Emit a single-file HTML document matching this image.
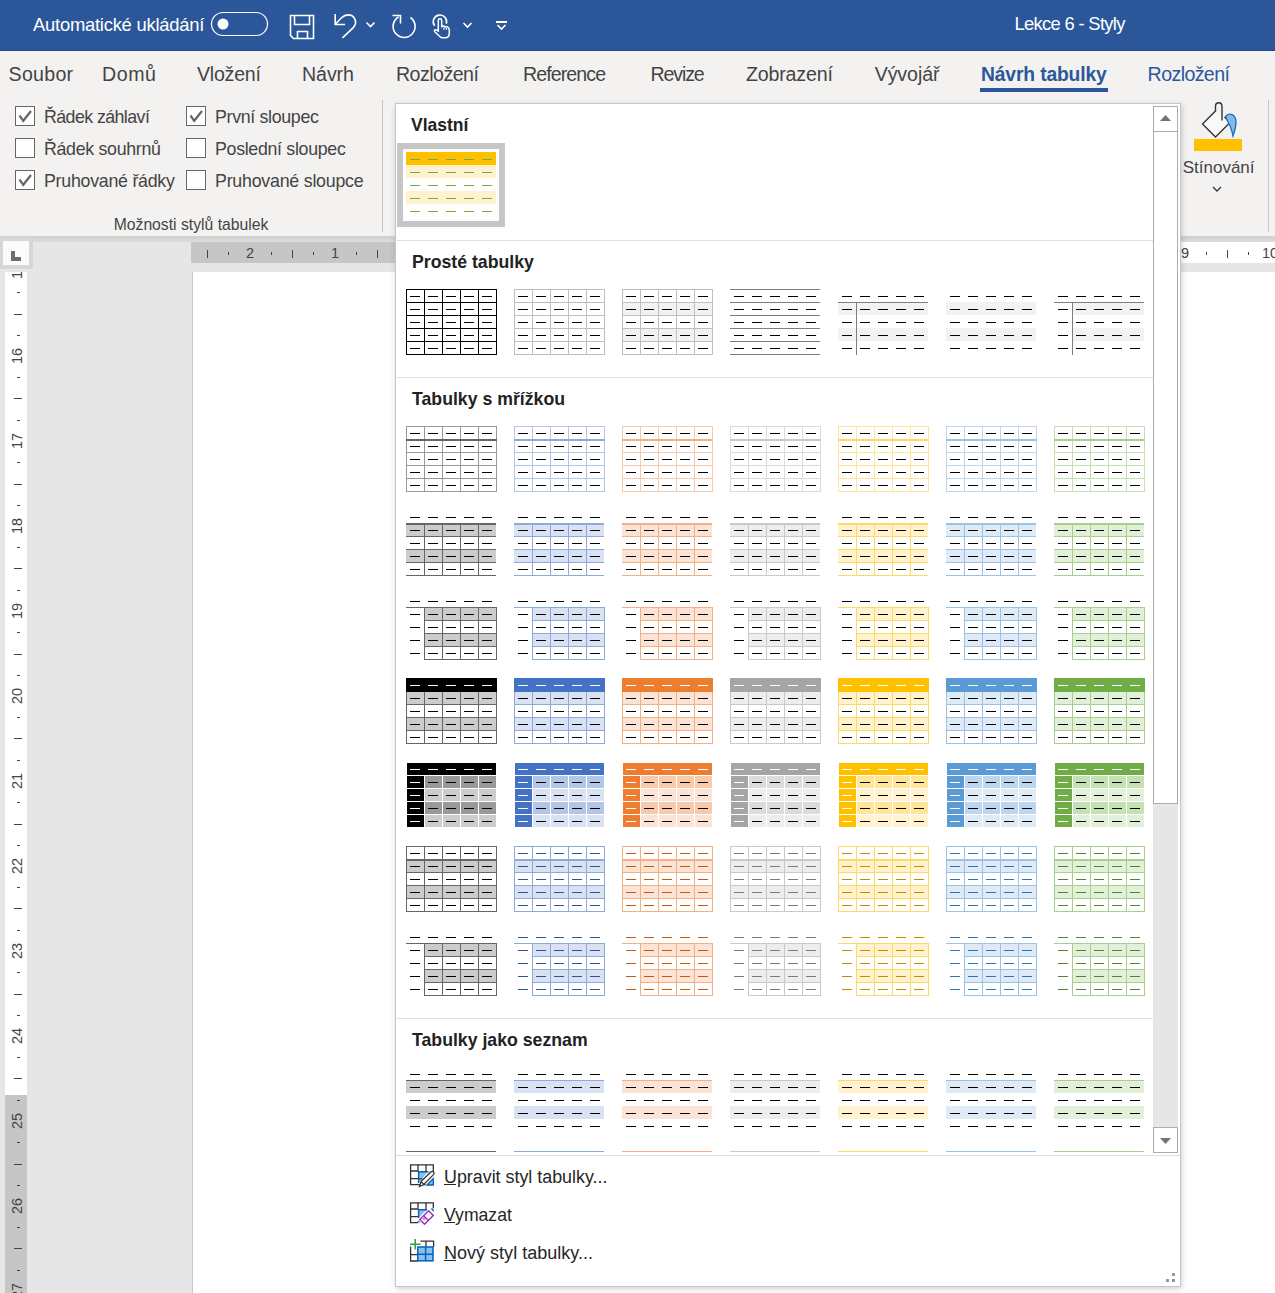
<!DOCTYPE html><html><head><meta charset="utf-8"><style>
*{box-sizing:border-box}
html,body{margin:0;padding:0}
body{width:1275px;height:1293px;overflow:hidden;position:relative;background:#e6e6e6;font-family:"Liberation Sans",sans-serif}
.t{position:absolute;white-space:nowrap;line-height:1;font-family:"Liberation Sans",sans-serif}
.a{position:absolute}
svg{position:absolute;left:0;top:0;overflow:visible}
</style></head><body>

<div class="a" style="left:0;top:0;width:1275px;height:51px;background:#2b579a"></div>
<div class="a" style="left:0;top:50px;width:1275px;height:1px;background:#1e4a8a"></div>
<div class="t" style="left:33.00px;top:16.00px;font-size:18.40px;color:#fff;letter-spacing:-0.237px;">Automatické ukládání</div>
<div class="t" style="left:1014.50px;top:15.00px;font-size:18.40px;color:#fff;letter-spacing:-0.693px;">Lekce 6 - Styly</div>
<svg width="1275" height="51" style="left:0;top:0">
<g fill="none" stroke="#fff" stroke-width="1.2">
<rect x="211.5" y="12.5" width="56" height="23" rx="11.5"/>
</g>
<circle cx="223" cy="24" r="5.5" fill="#fff"/>
<g fill="none" stroke="#fff" stroke-width="1.6" stroke-linejoin="miter">
<path d="M290.5 15.5 H313.5 V38.5 H293.5 L290.5 35.5 Z"/>
<path d="M294.5 15.5 V24.5 H309.5 V15.5"/>
<path d="M297.5 38.5 V31.5 H307.5 V38.5"/>
<path d="M335.2 14 V24.5 H345" />
<path d="M335.5 24 L341.5 17.8 C345.5 13.8 351.5 14 354 17.5 C356.5 21 355.8 25 352.8 28.2 L342.5 37.8"/>
<path d="M366.5 22.5 L370.5 26.5 L374.5 22.5"/>
<path d="M401 40 " />
<path d="M410.5 17.5 A11 11 0 1 1 398.5 17" />
<path d="M392.5 15.5 H400.5 V23.5" />
<path d="M463.5 23 L467.5 27 L471.5 23"/>
<path d="M496 22 H507" stroke-width="2"/>
<path d="M497.5 25 L501.5 29 L505.5 25"/>
<path d="M434.6 25.8 A6.7 6.7 0 1 1 446.3 23.8"/>
<path d="M438.3 31 V20.5 C438.3 18.2 441.7 18.2 441.7 20.5 V26.5 C443 25.8 444.5 26 445 27 C446.2 26.3 447.8 26.6 448.4 27.8 C449 28.2 449.3 29 449.3 30 V33.5 C449.3 36 447.5 37.8 445 37.8 H442.5 C441.2 37.8 440.5 37.2 439.8 36.4 L434.8 31.8 C434 31 434.5 29.5 435.8 29.8 C436.8 30 437.5 30.5 438.3 31 Z" stroke-width="1.5"/>
<path d="M443.9 27.5 V29.8 M446.4 28 V29.8" stroke-width="1.2"/>
</g>
</svg>
<div class="a" style="left:0;top:51px;width:1275px;height:185px;background:#f3f2f1"></div>
<div class="t" style="left:8.60px;top:65.00px;font-size:19.60px;color:#444;letter-spacing:0.258px;">Soubor</div>
<div class="t" style="left:102.00px;top:65.00px;font-size:19.60px;color:#444;letter-spacing:0.556px;">Domů</div>
<div class="t" style="left:197.00px;top:65.00px;font-size:19.60px;color:#444;letter-spacing:-0.244px;">Vložení</div>
<div class="t" style="left:302.00px;top:65.00px;font-size:19.60px;color:#444;letter-spacing:-0.083px;">Návrh</div>
<div class="t" style="left:396.00px;top:65.00px;font-size:19.60px;color:#444;letter-spacing:-0.527px;">Rozložení</div>
<div class="t" style="left:523.00px;top:65.00px;font-size:19.60px;color:#444;letter-spacing:-0.920px;">Reference</div>
<div class="t" style="left:650.50px;top:65.00px;font-size:19.60px;color:#444;letter-spacing:-1.135px;">Revize</div>
<div class="t" style="left:746.00px;top:65.00px;font-size:19.60px;color:#444;letter-spacing:-0.175px;">Zobrazení</div>
<div class="t" style="left:874.70px;top:65.00px;font-size:19.60px;color:#444;letter-spacing:-0.093px;">Vývojář</div>
<div class="t" style="left:981.00px;top:65.00px;font-size:19.30px;color:#2b579a;font-weight:700;letter-spacing:-0.147px;">Návrh tabulky</div>
<div class="t" style="left:1147.60px;top:65.00px;font-size:19.60px;color:#2b579a;letter-spacing:-0.602px;">Rozložení</div>
<div class="a" style="left:980px;top:88px;width:128px;height:4px;background:#2b579a"></div>
<div class="a" style="left:15px;top:106px;width:20px;height:20px;border:1px solid #666;background:#fff"></div><svg width="20" height="20" style="left:15px;top:106px"><path d="M4.5 9.5 L8.2 14.8 L16 5" fill="none" stroke="#666" stroke-width="2.2"/></svg>
<div class="t" style="left:44.00px;top:109.00px;font-size:17.80px;color:#444;letter-spacing:-0.571px;">Řádek záhlaví</div>
<div class="a" style="left:15px;top:138px;width:20px;height:20px;border:1px solid #666;background:#fff"></div>
<div class="t" style="left:44.00px;top:141.00px;font-size:17.80px;color:#444;letter-spacing:-0.307px;">Řádek souhrnů</div>
<div class="a" style="left:15px;top:170px;width:20px;height:20px;border:1px solid #666;background:#fff"></div><svg width="20" height="20" style="left:15px;top:170px"><path d="M4.5 9.5 L8.2 14.8 L16 5" fill="none" stroke="#666" stroke-width="2.2"/></svg>
<div class="t" style="left:44.00px;top:173.00px;font-size:17.80px;color:#444;letter-spacing:-0.255px;">Pruhované řádky</div>
<div class="a" style="left:186px;top:106px;width:20px;height:20px;border:1px solid #666;background:#fff"></div><svg width="20" height="20" style="left:186px;top:106px"><path d="M4.5 9.5 L8.2 14.8 L16 5" fill="none" stroke="#666" stroke-width="2.2"/></svg>
<div class="t" style="left:215.00px;top:109.00px;font-size:17.80px;color:#444;letter-spacing:-0.322px;">První sloupec</div>
<div class="a" style="left:186px;top:138px;width:20px;height:20px;border:1px solid #666;background:#fff"></div>
<div class="t" style="left:215.00px;top:141.00px;font-size:17.80px;color:#444;letter-spacing:-0.309px;">Poslední sloupec</div>
<div class="a" style="left:186px;top:170px;width:20px;height:20px;border:1px solid #666;background:#fff"></div>
<div class="t" style="left:215.00px;top:173.00px;font-size:17.80px;color:#444;letter-spacing:-0.223px;">Pruhované sloupce</div>
<div class="t" style="left:113.70px;top:217.00px;font-size:15.72px;color:#444;">Možnosti stylů tabulek</div>
<div class="a" style="left:382px;top:100px;width:1px;height:132px;background:#c8c6c4"></div>
<div class="a" style="left:1268px;top:100px;width:1px;height:132px;background:#c8c6c4"></div>
<div class="a" style="left:1194px;top:139px;width:48px;height:12px;background:#ffc000"></div>
<svg width="1275" height="236" style="left:0;top:0">
<path d="M1215.5 111 L1202.5 124 L1215.5 137 L1230 122.5 L1224 116.5 L1222 114.5 Z" fill="#f9f9f9" stroke="none"/>
<path d="M1215.5 111 L1202.5 124 L1215.5 137 L1230 122.5 L1224.5 117" fill="none" stroke="#333" stroke-width="1.4" stroke-linejoin="miter"/>
<path d="M1215.5 111.5 V106.5 C1215.5 101.5 1222 101.5 1222 106.5 V120.5" fill="none" stroke="#333" stroke-width="1.4"/>
<path d="M1225.5 116.5 C1229 112 1236 114 1236 122 C1236 128 1234 133 1233 136 C1232 131 1231 127 1228 122 Z" fill="#83b9e8" stroke="#1e6cc0" stroke-width="1.3"/>
<path d="M1213 187 L1217 191 L1221 187" fill="none" stroke="#333" stroke-width="1.3"/>
</svg>
<div class="t" style="left:1182.70px;top:159.00px;font-size:17.00px;color:#444;">Stínování</div>
<div class="a" style="left:0;top:236px;width:1275px;height:6px;background:linear-gradient(#cfcfcf,#dcdcdc)"></div>
<div class="a" style="left:191px;top:242px;width:1084px;height:21px;background:#fff"></div>
<div class="a" style="left:191px;top:242px;width:229px;height:21px;background:#c6c6c6"></div>
<div class="a" style="left:192px;top:272px;width:1083px;height:1021px;background:#fff;border-left:1px solid #c6c6c6"></div>
<div class="a" style="left:5px;top:272px;width:22px;height:823px;background:#fff"></div>
<div class="a" style="left:5px;top:1095px;width:22px;height:198px;background:#c6c6c6"></div>
<svg width="1275" height="1293" style="left:0;top:0"><defs><clipPath id="hrc"><rect x="191" y="242" width="1084" height="21"/></clipPath></defs><g clip-path="url(#hrc)"><rect x="186" y="252" width="1" height="3" fill="#444"/><rect x="207" y="250" width="1" height="8" fill="#444"/><rect x="228" y="252" width="1" height="3" fill="#444"/><rect x="271" y="252" width="1" height="3" fill="#444"/><rect x="292" y="250" width="1" height="8" fill="#444"/><rect x="313" y="252" width="1" height="3" fill="#444"/><rect x="356" y="252" width="1" height="3" fill="#444"/><rect x="377" y="250" width="1" height="8" fill="#444"/><rect x="398" y="252" width="1" height="3" fill="#444"/><rect x="441" y="252" width="1" height="3" fill="#444"/><rect x="462" y="250" width="1" height="8" fill="#444"/><rect x="483" y="252" width="1" height="3" fill="#444"/><rect x="526" y="252" width="1" height="3" fill="#444"/><rect x="547" y="250" width="1" height="8" fill="#444"/><rect x="568" y="252" width="1" height="3" fill="#444"/><rect x="611" y="252" width="1" height="3" fill="#444"/><rect x="632" y="250" width="1" height="8" fill="#444"/><rect x="653" y="252" width="1" height="3" fill="#444"/><rect x="696" y="252" width="1" height="3" fill="#444"/><rect x="717" y="250" width="1" height="8" fill="#444"/><rect x="738" y="252" width="1" height="3" fill="#444"/><rect x="781" y="252" width="1" height="3" fill="#444"/><rect x="802" y="250" width="1" height="8" fill="#444"/><rect x="823" y="252" width="1" height="3" fill="#444"/><rect x="866" y="252" width="1" height="3" fill="#444"/><rect x="887" y="250" width="1" height="8" fill="#444"/><rect x="908" y="252" width="1" height="3" fill="#444"/><rect x="951" y="252" width="1" height="3" fill="#444"/><rect x="972" y="250" width="1" height="8" fill="#444"/><rect x="993" y="252" width="1" height="3" fill="#444"/><rect x="1036" y="252" width="1" height="3" fill="#444"/><rect x="1057" y="250" width="1" height="8" fill="#444"/><rect x="1078" y="252" width="1" height="3" fill="#444"/><rect x="1121" y="252" width="1" height="3" fill="#444"/><rect x="1142" y="250" width="1" height="8" fill="#444"/><rect x="1163" y="252" width="1" height="3" fill="#444"/><rect x="1206" y="252" width="1" height="3" fill="#444"/><rect x="1227" y="250" width="1" height="8" fill="#444"/><rect x="1248" y="252" width="1" height="3" fill="#444"/><rect x="1291" y="252" width="1" height="3" fill="#444"/><rect x="1312" y="250" width="1" height="8" fill="#444"/><rect x="1333" y="252" width="1" height="3" fill="#444"/><rect x="1376" y="252" width="1" height="3" fill="#444"/><rect x="1397" y="250" width="1" height="8" fill="#444"/><rect x="1418" y="252" width="1" height="3" fill="#444"/></g></svg>
<div class="t" style="left:245.94px;top:246.00px;font-size:14.50px;color:#444;">2</div>
<div class="t" style="left:330.94px;top:246.00px;font-size:14.50px;color:#444;">1</div>
<div class="t" style="left:1180.94px;top:246.00px;font-size:14.50px;color:#444;">9</div>
<div class="t" style="left:1261.95px;top:246.00px;font-size:14.50px;color:#444;">10</div>
<div class="a" style="left:0;top:272px;width:40px;height:1021px;overflow:hidden">
<svg width="40" height="1100" style="left:0;top:0"><rect x="17" y="-65" width="3" height="1" fill="#444"/><rect x="14" y="-44" width="8" height="1" fill="#444"/><rect x="17" y="-22" width="3" height="1" fill="#444"/><rect x="17" y="20" width="3" height="1" fill="#444"/><rect x="14" y="42" width="8" height="1" fill="#444"/><rect x="17" y="63" width="3" height="1" fill="#444"/><rect x="17" y="105" width="3" height="1" fill="#444"/><rect x="14" y="126" width="8" height="1" fill="#444"/><rect x="17" y="148" width="3" height="1" fill="#444"/><rect x="17" y="190" width="3" height="1" fill="#444"/><rect x="14" y="212" width="8" height="1" fill="#444"/><rect x="17" y="233" width="3" height="1" fill="#444"/><rect x="17" y="275" width="3" height="1" fill="#444"/><rect x="14" y="296" width="8" height="1" fill="#444"/><rect x="17" y="318" width="3" height="1" fill="#444"/><rect x="17" y="360" width="3" height="1" fill="#444"/><rect x="14" y="382" width="8" height="1" fill="#444"/><rect x="17" y="403" width="3" height="1" fill="#444"/><rect x="17" y="445" width="3" height="1" fill="#444"/><rect x="14" y="466" width="8" height="1" fill="#444"/><rect x="17" y="488" width="3" height="1" fill="#444"/><rect x="17" y="530" width="3" height="1" fill="#444"/><rect x="14" y="552" width="8" height="1" fill="#444"/><rect x="17" y="573" width="3" height="1" fill="#444"/><rect x="17" y="615" width="3" height="1" fill="#444"/><rect x="14" y="636" width="8" height="1" fill="#444"/><rect x="17" y="658" width="3" height="1" fill="#444"/><rect x="17" y="700" width="3" height="1" fill="#444"/><rect x="14" y="722" width="8" height="1" fill="#444"/><rect x="17" y="743" width="3" height="1" fill="#444"/><rect x="17" y="785" width="3" height="1" fill="#444"/><rect x="14" y="806" width="8" height="1" fill="#444"/><rect x="17" y="828" width="3" height="1" fill="#444"/><rect x="17" y="870" width="3" height="1" fill="#444"/><rect x="14" y="892" width="8" height="1" fill="#444"/><rect x="17" y="913" width="3" height="1" fill="#444"/><rect x="17" y="955" width="3" height="1" fill="#444"/><rect x="14" y="976" width="8" height="1" fill="#444"/><rect x="17" y="998" width="3" height="1" fill="#444"/><rect x="17" y="1040" width="3" height="1" fill="#444"/><rect x="14" y="1062" width="8" height="1" fill="#444"/><rect x="17" y="1083" width="3" height="1" fill="#444"/></svg>
<div class="t" style="left:-23px;top:-9.0px;width:80px;height:16px;text-align:center;font-size:14.5px;line-height:16px;color:#444;transform:rotate(-90deg);transform-origin:40px 8px">15</div>
<div class="t" style="left:-23px;top:76.0px;width:80px;height:16px;text-align:center;font-size:14.5px;line-height:16px;color:#444;transform:rotate(-90deg);transform-origin:40px 8px">16</div>
<div class="t" style="left:-23px;top:161.0px;width:80px;height:16px;text-align:center;font-size:14.5px;line-height:16px;color:#444;transform:rotate(-90deg);transform-origin:40px 8px">17</div>
<div class="t" style="left:-23px;top:246.0px;width:80px;height:16px;text-align:center;font-size:14.5px;line-height:16px;color:#444;transform:rotate(-90deg);transform-origin:40px 8px">18</div>
<div class="t" style="left:-23px;top:331.0px;width:80px;height:16px;text-align:center;font-size:14.5px;line-height:16px;color:#444;transform:rotate(-90deg);transform-origin:40px 8px">19</div>
<div class="t" style="left:-23px;top:416.0px;width:80px;height:16px;text-align:center;font-size:14.5px;line-height:16px;color:#444;transform:rotate(-90deg);transform-origin:40px 8px">20</div>
<div class="t" style="left:-23px;top:501.0px;width:80px;height:16px;text-align:center;font-size:14.5px;line-height:16px;color:#444;transform:rotate(-90deg);transform-origin:40px 8px">21</div>
<div class="t" style="left:-23px;top:586.0px;width:80px;height:16px;text-align:center;font-size:14.5px;line-height:16px;color:#444;transform:rotate(-90deg);transform-origin:40px 8px">22</div>
<div class="t" style="left:-23px;top:671.0px;width:80px;height:16px;text-align:center;font-size:14.5px;line-height:16px;color:#444;transform:rotate(-90deg);transform-origin:40px 8px">23</div>
<div class="t" style="left:-23px;top:756.0px;width:80px;height:16px;text-align:center;font-size:14.5px;line-height:16px;color:#444;transform:rotate(-90deg);transform-origin:40px 8px">24</div>
<div class="t" style="left:-23px;top:841.0px;width:80px;height:16px;text-align:center;font-size:14.5px;line-height:16px;color:#444;transform:rotate(-90deg);transform-origin:40px 8px">25</div>
<div class="t" style="left:-23px;top:926.0px;width:80px;height:16px;text-align:center;font-size:14.5px;line-height:16px;color:#444;transform:rotate(-90deg);transform-origin:40px 8px">26</div>
<div class="t" style="left:-23px;top:1011.0px;width:80px;height:16px;text-align:center;font-size:14.5px;line-height:16px;color:#444;transform:rotate(-90deg);transform-origin:40px 8px">27</div>
</div>
<div class="a" style="left:0;top:237px;width:33px;height:32px;background:#d6d6d6"></div>
<div class="a" style="left:3px;top:241px;width:26px;height:24px;background:#fbfbfb"></div>
<div class="a" style="left:11px;top:251px;width:4px;height:10px;background:#6e6e6e"></div>
<div class="a" style="left:11px;top:257px;width:10px;height:4px;background:#6e6e6e"></div>
<div class="a" style="left:395px;top:103px;width:786px;height:1184px;background:#fff;border:1px solid #c6c6c6;box-shadow:1px 2px 6px rgba(0,0,0,0.18)"></div>
<div class="t" style="left:411.00px;top:117.00px;font-size:17.52px;color:#222;font-weight:700;">Vlastní</div>
<div class="t" style="left:412.00px;top:254.00px;font-size:17.71px;color:#222;font-weight:700;">Prosté tabulky</div>
<div class="t" style="left:412.00px;top:391.00px;font-size:17.69px;color:#222;font-weight:700;">Tabulky s mřížkou</div>
<div class="t" style="left:412.00px;top:1032.00px;font-size:17.72px;color:#222;font-weight:700;">Tabulky jako seznam</div>
<svg width="1275" height="1293" style="left:0;top:0;shape-rendering:crispEdges"><defs><clipPath id="gc"><rect x="396" y="104" width="757" height="1049"/></clipPath></defs><g clip-path="url(#gc)"><rect x="397" y="143" width="108" height="84" fill="#c6c6c6"/><rect x="403" y="149" width="96" height="72" fill="#fff"/><rect x="406" y="152" width="90" height="13" fill="#FFC000"/><rect x="406" y="165" width="90" height="13" fill="#FFF2CC"/><rect x="406" y="191" width="90" height="13" fill="#FFF2CC"/><rect x="410" y="159" width="10" height="1" fill="#70AD47"/><rect x="428" y="159" width="10" height="1" fill="#70AD47"/><rect x="446" y="159" width="10" height="1" fill="#70AD47"/><rect x="464" y="159" width="10" height="1" fill="#70AD47"/><rect x="482" y="159" width="10" height="1" fill="#70AD47"/><rect x="410" y="172" width="10" height="1" fill="#70AD47"/><rect x="428" y="172" width="10" height="1" fill="#70AD47"/><rect x="446" y="172" width="10" height="1" fill="#70AD47"/><rect x="464" y="172" width="10" height="1" fill="#70AD47"/><rect x="482" y="172" width="10" height="1" fill="#70AD47"/><rect x="410" y="185" width="10" height="1" fill="#70AD47"/><rect x="428" y="185" width="10" height="1" fill="#70AD47"/><rect x="446" y="185" width="10" height="1" fill="#70AD47"/><rect x="464" y="185" width="10" height="1" fill="#70AD47"/><rect x="482" y="185" width="10" height="1" fill="#70AD47"/><rect x="410" y="198" width="10" height="1" fill="#70AD47"/><rect x="428" y="198" width="10" height="1" fill="#70AD47"/><rect x="446" y="198" width="10" height="1" fill="#70AD47"/><rect x="464" y="198" width="10" height="1" fill="#70AD47"/><rect x="482" y="198" width="10" height="1" fill="#70AD47"/><rect x="410" y="211" width="10" height="1" fill="#70AD47"/><rect x="428" y="211" width="10" height="1" fill="#70AD47"/><rect x="446" y="211" width="10" height="1" fill="#70AD47"/><rect x="464" y="211" width="10" height="1" fill="#70AD47"/><rect x="482" y="211" width="10" height="1" fill="#70AD47"/><rect x="397" y="240" width="756" height="1" fill="#e1dfdd"/><rect x="406" y="289" width="91" height="1" fill="#000000"/><rect x="406" y="302" width="91" height="1" fill="#000000"/><rect x="406" y="315" width="91" height="1" fill="#000000"/><rect x="406" y="328" width="91" height="1" fill="#000000"/><rect x="406" y="341" width="91" height="1" fill="#000000"/><rect x="406" y="354" width="91" height="1" fill="#000000"/><rect x="406" y="289" width="1" height="66" fill="#000000"/><rect x="424" y="289" width="1" height="66" fill="#000000"/><rect x="442" y="289" width="1" height="66" fill="#000000"/><rect x="460" y="289" width="1" height="66" fill="#000000"/><rect x="478" y="289" width="1" height="66" fill="#000000"/><rect x="496" y="289" width="1" height="66" fill="#000000"/><rect x="410" y="296" width="10" height="1" fill="#000000"/><rect x="428" y="296" width="10" height="1" fill="#000000"/><rect x="446" y="296" width="10" height="1" fill="#000000"/><rect x="464" y="296" width="10" height="1" fill="#000000"/><rect x="482" y="296" width="10" height="1" fill="#000000"/><rect x="410" y="309" width="10" height="1" fill="#000000"/><rect x="428" y="309" width="10" height="1" fill="#000000"/><rect x="446" y="309" width="10" height="1" fill="#000000"/><rect x="464" y="309" width="10" height="1" fill="#000000"/><rect x="482" y="309" width="10" height="1" fill="#000000"/><rect x="410" y="322" width="10" height="1" fill="#000000"/><rect x="428" y="322" width="10" height="1" fill="#000000"/><rect x="446" y="322" width="10" height="1" fill="#000000"/><rect x="464" y="322" width="10" height="1" fill="#000000"/><rect x="482" y="322" width="10" height="1" fill="#000000"/><rect x="410" y="335" width="10" height="1" fill="#000000"/><rect x="428" y="335" width="10" height="1" fill="#000000"/><rect x="446" y="335" width="10" height="1" fill="#000000"/><rect x="464" y="335" width="10" height="1" fill="#000000"/><rect x="482" y="335" width="10" height="1" fill="#000000"/><rect x="410" y="348" width="10" height="1" fill="#000000"/><rect x="428" y="348" width="10" height="1" fill="#000000"/><rect x="446" y="348" width="10" height="1" fill="#000000"/><rect x="464" y="348" width="10" height="1" fill="#000000"/><rect x="482" y="348" width="10" height="1" fill="#000000"/><rect x="514" y="289" width="91" height="1" fill="#BFBFBF"/><rect x="514" y="302" width="91" height="1" fill="#BFBFBF"/><rect x="514" y="315" width="91" height="1" fill="#BFBFBF"/><rect x="514" y="328" width="91" height="1" fill="#BFBFBF"/><rect x="514" y="341" width="91" height="1" fill="#BFBFBF"/><rect x="514" y="354" width="91" height="1" fill="#BFBFBF"/><rect x="514" y="289" width="1" height="66" fill="#BFBFBF"/><rect x="532" y="289" width="1" height="66" fill="#BFBFBF"/><rect x="550" y="289" width="1" height="66" fill="#BFBFBF"/><rect x="568" y="289" width="1" height="66" fill="#BFBFBF"/><rect x="586" y="289" width="1" height="66" fill="#BFBFBF"/><rect x="604" y="289" width="1" height="66" fill="#BFBFBF"/><rect x="518" y="296" width="10" height="1" fill="#000000"/><rect x="536" y="296" width="10" height="1" fill="#000000"/><rect x="554" y="296" width="10" height="1" fill="#000000"/><rect x="572" y="296" width="10" height="1" fill="#000000"/><rect x="590" y="296" width="10" height="1" fill="#000000"/><rect x="518" y="309" width="10" height="1" fill="#000000"/><rect x="536" y="309" width="10" height="1" fill="#000000"/><rect x="554" y="309" width="10" height="1" fill="#000000"/><rect x="572" y="309" width="10" height="1" fill="#000000"/><rect x="590" y="309" width="10" height="1" fill="#000000"/><rect x="518" y="322" width="10" height="1" fill="#000000"/><rect x="536" y="322" width="10" height="1" fill="#000000"/><rect x="554" y="322" width="10" height="1" fill="#000000"/><rect x="572" y="322" width="10" height="1" fill="#000000"/><rect x="590" y="322" width="10" height="1" fill="#000000"/><rect x="518" y="335" width="10" height="1" fill="#000000"/><rect x="536" y="335" width="10" height="1" fill="#000000"/><rect x="554" y="335" width="10" height="1" fill="#000000"/><rect x="572" y="335" width="10" height="1" fill="#000000"/><rect x="590" y="335" width="10" height="1" fill="#000000"/><rect x="518" y="348" width="10" height="1" fill="#000000"/><rect x="536" y="348" width="10" height="1" fill="#000000"/><rect x="554" y="348" width="10" height="1" fill="#000000"/><rect x="572" y="348" width="10" height="1" fill="#000000"/><rect x="590" y="348" width="10" height="1" fill="#000000"/><rect x="622" y="302" width="91" height="13" fill="#F2F2F2"/><rect x="622" y="328" width="91" height="13" fill="#F2F2F2"/><rect x="622" y="289" width="91" height="1" fill="#BFBFBF"/><rect x="622" y="302" width="91" height="1" fill="#BFBFBF"/><rect x="622" y="315" width="91" height="1" fill="#BFBFBF"/><rect x="622" y="328" width="91" height="1" fill="#BFBFBF"/><rect x="622" y="341" width="91" height="1" fill="#BFBFBF"/><rect x="622" y="354" width="91" height="1" fill="#BFBFBF"/><rect x="622" y="289" width="1" height="66" fill="#BFBFBF"/><rect x="640" y="289" width="1" height="66" fill="#BFBFBF"/><rect x="658" y="289" width="1" height="66" fill="#BFBFBF"/><rect x="676" y="289" width="1" height="66" fill="#BFBFBF"/><rect x="694" y="289" width="1" height="66" fill="#BFBFBF"/><rect x="712" y="289" width="1" height="66" fill="#BFBFBF"/><rect x="626" y="296" width="10" height="1" fill="#000000"/><rect x="644" y="296" width="10" height="1" fill="#000000"/><rect x="662" y="296" width="10" height="1" fill="#000000"/><rect x="680" y="296" width="10" height="1" fill="#000000"/><rect x="698" y="296" width="10" height="1" fill="#000000"/><rect x="626" y="309" width="10" height="1" fill="#000000"/><rect x="644" y="309" width="10" height="1" fill="#000000"/><rect x="662" y="309" width="10" height="1" fill="#000000"/><rect x="680" y="309" width="10" height="1" fill="#000000"/><rect x="698" y="309" width="10" height="1" fill="#000000"/><rect x="626" y="322" width="10" height="1" fill="#000000"/><rect x="644" y="322" width="10" height="1" fill="#000000"/><rect x="662" y="322" width="10" height="1" fill="#000000"/><rect x="680" y="322" width="10" height="1" fill="#000000"/><rect x="698" y="322" width="10" height="1" fill="#000000"/><rect x="626" y="335" width="10" height="1" fill="#000000"/><rect x="644" y="335" width="10" height="1" fill="#000000"/><rect x="662" y="335" width="10" height="1" fill="#000000"/><rect x="680" y="335" width="10" height="1" fill="#000000"/><rect x="698" y="335" width="10" height="1" fill="#000000"/><rect x="626" y="348" width="10" height="1" fill="#000000"/><rect x="644" y="348" width="10" height="1" fill="#000000"/><rect x="662" y="348" width="10" height="1" fill="#000000"/><rect x="680" y="348" width="10" height="1" fill="#000000"/><rect x="698" y="348" width="10" height="1" fill="#000000"/><rect x="730" y="289" width="90" height="1" fill="#7F7F7F"/><rect x="730" y="302" width="90" height="1" fill="#7F7F7F"/><rect x="730" y="315" width="90" height="1" fill="#7F7F7F"/><rect x="730" y="328" width="90" height="1" fill="#7F7F7F"/><rect x="730" y="341" width="90" height="1" fill="#7F7F7F"/><rect x="730" y="354" width="90" height="1" fill="#7F7F7F"/><rect x="734" y="296" width="10" height="1" fill="#000000"/><rect x="752" y="296" width="10" height="1" fill="#000000"/><rect x="770" y="296" width="10" height="1" fill="#000000"/><rect x="788" y="296" width="10" height="1" fill="#000000"/><rect x="806" y="296" width="10" height="1" fill="#000000"/><rect x="734" y="309" width="10" height="1" fill="#000000"/><rect x="752" y="309" width="10" height="1" fill="#000000"/><rect x="770" y="309" width="10" height="1" fill="#000000"/><rect x="788" y="309" width="10" height="1" fill="#000000"/><rect x="806" y="309" width="10" height="1" fill="#000000"/><rect x="734" y="322" width="10" height="1" fill="#000000"/><rect x="752" y="322" width="10" height="1" fill="#000000"/><rect x="770" y="322" width="10" height="1" fill="#000000"/><rect x="788" y="322" width="10" height="1" fill="#000000"/><rect x="806" y="322" width="10" height="1" fill="#000000"/><rect x="734" y="335" width="10" height="1" fill="#000000"/><rect x="752" y="335" width="10" height="1" fill="#000000"/><rect x="770" y="335" width="10" height="1" fill="#000000"/><rect x="788" y="335" width="10" height="1" fill="#000000"/><rect x="806" y="335" width="10" height="1" fill="#000000"/><rect x="734" y="348" width="10" height="1" fill="#000000"/><rect x="752" y="348" width="10" height="1" fill="#000000"/><rect x="770" y="348" width="10" height="1" fill="#000000"/><rect x="788" y="348" width="10" height="1" fill="#000000"/><rect x="806" y="348" width="10" height="1" fill="#000000"/><rect x="838" y="302" width="90" height="13" fill="#F2F2F2"/><rect x="838" y="328" width="90" height="13" fill="#F2F2F2"/><rect x="838" y="302" width="90" height="1" fill="#7F7F7F"/><rect x="856" y="302" width="1" height="53" fill="#7F7F7F"/><rect x="842" y="296" width="10" height="1" fill="#000000"/><rect x="860" y="296" width="10" height="1" fill="#000000"/><rect x="878" y="296" width="10" height="1" fill="#000000"/><rect x="896" y="296" width="10" height="1" fill="#000000"/><rect x="914" y="296" width="10" height="1" fill="#000000"/><rect x="842" y="309" width="10" height="1" fill="#000000"/><rect x="860" y="309" width="10" height="1" fill="#000000"/><rect x="878" y="309" width="10" height="1" fill="#000000"/><rect x="896" y="309" width="10" height="1" fill="#000000"/><rect x="914" y="309" width="10" height="1" fill="#000000"/><rect x="842" y="322" width="10" height="1" fill="#000000"/><rect x="860" y="322" width="10" height="1" fill="#000000"/><rect x="878" y="322" width="10" height="1" fill="#000000"/><rect x="896" y="322" width="10" height="1" fill="#000000"/><rect x="914" y="322" width="10" height="1" fill="#000000"/><rect x="842" y="335" width="10" height="1" fill="#000000"/><rect x="860" y="335" width="10" height="1" fill="#000000"/><rect x="878" y="335" width="10" height="1" fill="#000000"/><rect x="896" y="335" width="10" height="1" fill="#000000"/><rect x="914" y="335" width="10" height="1" fill="#000000"/><rect x="842" y="348" width="10" height="1" fill="#000000"/><rect x="860" y="348" width="10" height="1" fill="#000000"/><rect x="878" y="348" width="10" height="1" fill="#000000"/><rect x="896" y="348" width="10" height="1" fill="#000000"/><rect x="914" y="348" width="10" height="1" fill="#000000"/><rect x="946" y="302" width="90" height="13" fill="#F2F2F2"/><rect x="946" y="328" width="90" height="13" fill="#F2F2F2"/><rect x="950" y="296" width="10" height="1" fill="#000000"/><rect x="968" y="296" width="10" height="1" fill="#000000"/><rect x="986" y="296" width="10" height="1" fill="#000000"/><rect x="1004" y="296" width="10" height="1" fill="#000000"/><rect x="1022" y="296" width="10" height="1" fill="#000000"/><rect x="950" y="309" width="10" height="1" fill="#000000"/><rect x="968" y="309" width="10" height="1" fill="#000000"/><rect x="986" y="309" width="10" height="1" fill="#000000"/><rect x="1004" y="309" width="10" height="1" fill="#000000"/><rect x="1022" y="309" width="10" height="1" fill="#000000"/><rect x="950" y="322" width="10" height="1" fill="#000000"/><rect x="968" y="322" width="10" height="1" fill="#000000"/><rect x="986" y="322" width="10" height="1" fill="#000000"/><rect x="1004" y="322" width="10" height="1" fill="#000000"/><rect x="1022" y="322" width="10" height="1" fill="#000000"/><rect x="950" y="335" width="10" height="1" fill="#000000"/><rect x="968" y="335" width="10" height="1" fill="#000000"/><rect x="986" y="335" width="10" height="1" fill="#000000"/><rect x="1004" y="335" width="10" height="1" fill="#000000"/><rect x="1022" y="335" width="10" height="1" fill="#000000"/><rect x="950" y="348" width="10" height="1" fill="#000000"/><rect x="968" y="348" width="10" height="1" fill="#000000"/><rect x="986" y="348" width="10" height="1" fill="#000000"/><rect x="1004" y="348" width="10" height="1" fill="#000000"/><rect x="1022" y="348" width="10" height="1" fill="#000000"/><rect x="1073" y="302" width="71" height="13" fill="#F2F2F2"/><rect x="1073" y="328" width="71" height="13" fill="#F2F2F2"/><rect x="1054" y="302" width="90" height="1" fill="#7F7F7F"/><rect x="1072" y="302" width="1" height="53" fill="#7F7F7F"/><rect x="1058" y="296" width="10" height="1" fill="#000000"/><rect x="1076" y="296" width="10" height="1" fill="#000000"/><rect x="1094" y="296" width="10" height="1" fill="#000000"/><rect x="1112" y="296" width="10" height="1" fill="#000000"/><rect x="1130" y="296" width="10" height="1" fill="#000000"/><rect x="1058" y="309" width="10" height="1" fill="#000000"/><rect x="1076" y="309" width="10" height="1" fill="#000000"/><rect x="1094" y="309" width="10" height="1" fill="#000000"/><rect x="1112" y="309" width="10" height="1" fill="#000000"/><rect x="1130" y="309" width="10" height="1" fill="#000000"/><rect x="1058" y="322" width="10" height="1" fill="#000000"/><rect x="1076" y="322" width="10" height="1" fill="#000000"/><rect x="1094" y="322" width="10" height="1" fill="#000000"/><rect x="1112" y="322" width="10" height="1" fill="#000000"/><rect x="1130" y="322" width="10" height="1" fill="#000000"/><rect x="1058" y="335" width="10" height="1" fill="#000000"/><rect x="1076" y="335" width="10" height="1" fill="#000000"/><rect x="1094" y="335" width="10" height="1" fill="#000000"/><rect x="1112" y="335" width="10" height="1" fill="#000000"/><rect x="1130" y="335" width="10" height="1" fill="#000000"/><rect x="1058" y="348" width="10" height="1" fill="#000000"/><rect x="1076" y="348" width="10" height="1" fill="#000000"/><rect x="1094" y="348" width="10" height="1" fill="#000000"/><rect x="1112" y="348" width="10" height="1" fill="#000000"/><rect x="1130" y="348" width="10" height="1" fill="#000000"/><rect x="397" y="377" width="756" height="1" fill="#e1dfdd"/><rect x="406" y="426" width="91" height="1" fill="#999999"/><rect x="406" y="439" width="91" height="1" fill="#999999"/><rect x="406" y="452" width="91" height="1" fill="#999999"/><rect x="406" y="465" width="91" height="1" fill="#999999"/><rect x="406" y="478" width="91" height="1" fill="#999999"/><rect x="406" y="491" width="91" height="1" fill="#999999"/><rect x="406" y="426" width="1" height="66" fill="#999999"/><rect x="424" y="426" width="1" height="66" fill="#999999"/><rect x="442" y="426" width="1" height="66" fill="#999999"/><rect x="460" y="426" width="1" height="66" fill="#999999"/><rect x="478" y="426" width="1" height="66" fill="#999999"/><rect x="496" y="426" width="1" height="66" fill="#999999"/><rect x="406" y="439" width="91" height="2" fill="#666666"/><rect x="410" y="433" width="10" height="1" fill="#000"/><rect x="428" y="433" width="10" height="1" fill="#000"/><rect x="446" y="433" width="10" height="1" fill="#000"/><rect x="464" y="433" width="10" height="1" fill="#000"/><rect x="482" y="433" width="10" height="1" fill="#000"/><rect x="410" y="446" width="10" height="1" fill="#000"/><rect x="428" y="446" width="10" height="1" fill="#000"/><rect x="446" y="446" width="10" height="1" fill="#000"/><rect x="464" y="446" width="10" height="1" fill="#000"/><rect x="482" y="446" width="10" height="1" fill="#000"/><rect x="410" y="459" width="10" height="1" fill="#000"/><rect x="428" y="459" width="10" height="1" fill="#000"/><rect x="446" y="459" width="10" height="1" fill="#000"/><rect x="464" y="459" width="10" height="1" fill="#000"/><rect x="482" y="459" width="10" height="1" fill="#000"/><rect x="410" y="472" width="10" height="1" fill="#000"/><rect x="428" y="472" width="10" height="1" fill="#000"/><rect x="446" y="472" width="10" height="1" fill="#000"/><rect x="464" y="472" width="10" height="1" fill="#000"/><rect x="482" y="472" width="10" height="1" fill="#000"/><rect x="410" y="485" width="10" height="1" fill="#000"/><rect x="428" y="485" width="10" height="1" fill="#000"/><rect x="446" y="485" width="10" height="1" fill="#000"/><rect x="464" y="485" width="10" height="1" fill="#000"/><rect x="482" y="485" width="10" height="1" fill="#000"/><rect x="514" y="426" width="91" height="1" fill="#B4C6E7"/><rect x="514" y="439" width="91" height="1" fill="#B4C6E7"/><rect x="514" y="452" width="91" height="1" fill="#B4C6E7"/><rect x="514" y="465" width="91" height="1" fill="#B4C6E7"/><rect x="514" y="478" width="91" height="1" fill="#B4C6E7"/><rect x="514" y="491" width="91" height="1" fill="#B4C6E7"/><rect x="514" y="426" width="1" height="66" fill="#B4C6E7"/><rect x="532" y="426" width="1" height="66" fill="#B4C6E7"/><rect x="550" y="426" width="1" height="66" fill="#B4C6E7"/><rect x="568" y="426" width="1" height="66" fill="#B4C6E7"/><rect x="586" y="426" width="1" height="66" fill="#B4C6E7"/><rect x="604" y="426" width="1" height="66" fill="#B4C6E7"/><rect x="514" y="439" width="91" height="2" fill="#8EAADB"/><rect x="518" y="433" width="10" height="1" fill="#000"/><rect x="536" y="433" width="10" height="1" fill="#000"/><rect x="554" y="433" width="10" height="1" fill="#000"/><rect x="572" y="433" width="10" height="1" fill="#000"/><rect x="590" y="433" width="10" height="1" fill="#000"/><rect x="518" y="446" width="10" height="1" fill="#000"/><rect x="536" y="446" width="10" height="1" fill="#000"/><rect x="554" y="446" width="10" height="1" fill="#000"/><rect x="572" y="446" width="10" height="1" fill="#000"/><rect x="590" y="446" width="10" height="1" fill="#000"/><rect x="518" y="459" width="10" height="1" fill="#000"/><rect x="536" y="459" width="10" height="1" fill="#000"/><rect x="554" y="459" width="10" height="1" fill="#000"/><rect x="572" y="459" width="10" height="1" fill="#000"/><rect x="590" y="459" width="10" height="1" fill="#000"/><rect x="518" y="472" width="10" height="1" fill="#000"/><rect x="536" y="472" width="10" height="1" fill="#000"/><rect x="554" y="472" width="10" height="1" fill="#000"/><rect x="572" y="472" width="10" height="1" fill="#000"/><rect x="590" y="472" width="10" height="1" fill="#000"/><rect x="518" y="485" width="10" height="1" fill="#000"/><rect x="536" y="485" width="10" height="1" fill="#000"/><rect x="554" y="485" width="10" height="1" fill="#000"/><rect x="572" y="485" width="10" height="1" fill="#000"/><rect x="590" y="485" width="10" height="1" fill="#000"/><rect x="622" y="426" width="91" height="1" fill="#F7CAAC"/><rect x="622" y="439" width="91" height="1" fill="#F7CAAC"/><rect x="622" y="452" width="91" height="1" fill="#F7CAAC"/><rect x="622" y="465" width="91" height="1" fill="#F7CAAC"/><rect x="622" y="478" width="91" height="1" fill="#F7CAAC"/><rect x="622" y="491" width="91" height="1" fill="#F7CAAC"/><rect x="622" y="426" width="1" height="66" fill="#F7CAAC"/><rect x="640" y="426" width="1" height="66" fill="#F7CAAC"/><rect x="658" y="426" width="1" height="66" fill="#F7CAAC"/><rect x="676" y="426" width="1" height="66" fill="#F7CAAC"/><rect x="694" y="426" width="1" height="66" fill="#F7CAAC"/><rect x="712" y="426" width="1" height="66" fill="#F7CAAC"/><rect x="622" y="439" width="91" height="2" fill="#F4B083"/><rect x="626" y="433" width="10" height="1" fill="#000"/><rect x="644" y="433" width="10" height="1" fill="#000"/><rect x="662" y="433" width="10" height="1" fill="#000"/><rect x="680" y="433" width="10" height="1" fill="#000"/><rect x="698" y="433" width="10" height="1" fill="#000"/><rect x="626" y="446" width="10" height="1" fill="#000"/><rect x="644" y="446" width="10" height="1" fill="#000"/><rect x="662" y="446" width="10" height="1" fill="#000"/><rect x="680" y="446" width="10" height="1" fill="#000"/><rect x="698" y="446" width="10" height="1" fill="#000"/><rect x="626" y="459" width="10" height="1" fill="#000"/><rect x="644" y="459" width="10" height="1" fill="#000"/><rect x="662" y="459" width="10" height="1" fill="#000"/><rect x="680" y="459" width="10" height="1" fill="#000"/><rect x="698" y="459" width="10" height="1" fill="#000"/><rect x="626" y="472" width="10" height="1" fill="#000"/><rect x="644" y="472" width="10" height="1" fill="#000"/><rect x="662" y="472" width="10" height="1" fill="#000"/><rect x="680" y="472" width="10" height="1" fill="#000"/><rect x="698" y="472" width="10" height="1" fill="#000"/><rect x="626" y="485" width="10" height="1" fill="#000"/><rect x="644" y="485" width="10" height="1" fill="#000"/><rect x="662" y="485" width="10" height="1" fill="#000"/><rect x="680" y="485" width="10" height="1" fill="#000"/><rect x="698" y="485" width="10" height="1" fill="#000"/><rect x="730" y="426" width="91" height="1" fill="#DBDBDB"/><rect x="730" y="439" width="91" height="1" fill="#DBDBDB"/><rect x="730" y="452" width="91" height="1" fill="#DBDBDB"/><rect x="730" y="465" width="91" height="1" fill="#DBDBDB"/><rect x="730" y="478" width="91" height="1" fill="#DBDBDB"/><rect x="730" y="491" width="91" height="1" fill="#DBDBDB"/><rect x="730" y="426" width="1" height="66" fill="#DBDBDB"/><rect x="748" y="426" width="1" height="66" fill="#DBDBDB"/><rect x="766" y="426" width="1" height="66" fill="#DBDBDB"/><rect x="784" y="426" width="1" height="66" fill="#DBDBDB"/><rect x="802" y="426" width="1" height="66" fill="#DBDBDB"/><rect x="820" y="426" width="1" height="66" fill="#DBDBDB"/><rect x="730" y="439" width="91" height="2" fill="#C9C9C9"/><rect x="734" y="433" width="10" height="1" fill="#000"/><rect x="752" y="433" width="10" height="1" fill="#000"/><rect x="770" y="433" width="10" height="1" fill="#000"/><rect x="788" y="433" width="10" height="1" fill="#000"/><rect x="806" y="433" width="10" height="1" fill="#000"/><rect x="734" y="446" width="10" height="1" fill="#000"/><rect x="752" y="446" width="10" height="1" fill="#000"/><rect x="770" y="446" width="10" height="1" fill="#000"/><rect x="788" y="446" width="10" height="1" fill="#000"/><rect x="806" y="446" width="10" height="1" fill="#000"/><rect x="734" y="459" width="10" height="1" fill="#000"/><rect x="752" y="459" width="10" height="1" fill="#000"/><rect x="770" y="459" width="10" height="1" fill="#000"/><rect x="788" y="459" width="10" height="1" fill="#000"/><rect x="806" y="459" width="10" height="1" fill="#000"/><rect x="734" y="472" width="10" height="1" fill="#000"/><rect x="752" y="472" width="10" height="1" fill="#000"/><rect x="770" y="472" width="10" height="1" fill="#000"/><rect x="788" y="472" width="10" height="1" fill="#000"/><rect x="806" y="472" width="10" height="1" fill="#000"/><rect x="734" y="485" width="10" height="1" fill="#000"/><rect x="752" y="485" width="10" height="1" fill="#000"/><rect x="770" y="485" width="10" height="1" fill="#000"/><rect x="788" y="485" width="10" height="1" fill="#000"/><rect x="806" y="485" width="10" height="1" fill="#000"/><rect x="838" y="426" width="91" height="1" fill="#FFE599"/><rect x="838" y="439" width="91" height="1" fill="#FFE599"/><rect x="838" y="452" width="91" height="1" fill="#FFE599"/><rect x="838" y="465" width="91" height="1" fill="#FFE599"/><rect x="838" y="478" width="91" height="1" fill="#FFE599"/><rect x="838" y="491" width="91" height="1" fill="#FFE599"/><rect x="838" y="426" width="1" height="66" fill="#FFE599"/><rect x="856" y="426" width="1" height="66" fill="#FFE599"/><rect x="874" y="426" width="1" height="66" fill="#FFE599"/><rect x="892" y="426" width="1" height="66" fill="#FFE599"/><rect x="910" y="426" width="1" height="66" fill="#FFE599"/><rect x="928" y="426" width="1" height="66" fill="#FFE599"/><rect x="838" y="439" width="91" height="2" fill="#FFD966"/><rect x="842" y="433" width="10" height="1" fill="#000"/><rect x="860" y="433" width="10" height="1" fill="#000"/><rect x="878" y="433" width="10" height="1" fill="#000"/><rect x="896" y="433" width="10" height="1" fill="#000"/><rect x="914" y="433" width="10" height="1" fill="#000"/><rect x="842" y="446" width="10" height="1" fill="#000"/><rect x="860" y="446" width="10" height="1" fill="#000"/><rect x="878" y="446" width="10" height="1" fill="#000"/><rect x="896" y="446" width="10" height="1" fill="#000"/><rect x="914" y="446" width="10" height="1" fill="#000"/><rect x="842" y="459" width="10" height="1" fill="#000"/><rect x="860" y="459" width="10" height="1" fill="#000"/><rect x="878" y="459" width="10" height="1" fill="#000"/><rect x="896" y="459" width="10" height="1" fill="#000"/><rect x="914" y="459" width="10" height="1" fill="#000"/><rect x="842" y="472" width="10" height="1" fill="#000"/><rect x="860" y="472" width="10" height="1" fill="#000"/><rect x="878" y="472" width="10" height="1" fill="#000"/><rect x="896" y="472" width="10" height="1" fill="#000"/><rect x="914" y="472" width="10" height="1" fill="#000"/><rect x="842" y="485" width="10" height="1" fill="#000"/><rect x="860" y="485" width="10" height="1" fill="#000"/><rect x="878" y="485" width="10" height="1" fill="#000"/><rect x="896" y="485" width="10" height="1" fill="#000"/><rect x="914" y="485" width="10" height="1" fill="#000"/><rect x="946" y="426" width="91" height="1" fill="#BDD6EE"/><rect x="946" y="439" width="91" height="1" fill="#BDD6EE"/><rect x="946" y="452" width="91" height="1" fill="#BDD6EE"/><rect x="946" y="465" width="91" height="1" fill="#BDD6EE"/><rect x="946" y="478" width="91" height="1" fill="#BDD6EE"/><rect x="946" y="491" width="91" height="1" fill="#BDD6EE"/><rect x="946" y="426" width="1" height="66" fill="#BDD6EE"/><rect x="964" y="426" width="1" height="66" fill="#BDD6EE"/><rect x="982" y="426" width="1" height="66" fill="#BDD6EE"/><rect x="1000" y="426" width="1" height="66" fill="#BDD6EE"/><rect x="1018" y="426" width="1" height="66" fill="#BDD6EE"/><rect x="1036" y="426" width="1" height="66" fill="#BDD6EE"/><rect x="946" y="439" width="91" height="2" fill="#9CC2E5"/><rect x="950" y="433" width="10" height="1" fill="#000"/><rect x="968" y="433" width="10" height="1" fill="#000"/><rect x="986" y="433" width="10" height="1" fill="#000"/><rect x="1004" y="433" width="10" height="1" fill="#000"/><rect x="1022" y="433" width="10" height="1" fill="#000"/><rect x="950" y="446" width="10" height="1" fill="#000"/><rect x="968" y="446" width="10" height="1" fill="#000"/><rect x="986" y="446" width="10" height="1" fill="#000"/><rect x="1004" y="446" width="10" height="1" fill="#000"/><rect x="1022" y="446" width="10" height="1" fill="#000"/><rect x="950" y="459" width="10" height="1" fill="#000"/><rect x="968" y="459" width="10" height="1" fill="#000"/><rect x="986" y="459" width="10" height="1" fill="#000"/><rect x="1004" y="459" width="10" height="1" fill="#000"/><rect x="1022" y="459" width="10" height="1" fill="#000"/><rect x="950" y="472" width="10" height="1" fill="#000"/><rect x="968" y="472" width="10" height="1" fill="#000"/><rect x="986" y="472" width="10" height="1" fill="#000"/><rect x="1004" y="472" width="10" height="1" fill="#000"/><rect x="1022" y="472" width="10" height="1" fill="#000"/><rect x="950" y="485" width="10" height="1" fill="#000"/><rect x="968" y="485" width="10" height="1" fill="#000"/><rect x="986" y="485" width="10" height="1" fill="#000"/><rect x="1004" y="485" width="10" height="1" fill="#000"/><rect x="1022" y="485" width="10" height="1" fill="#000"/><rect x="1054" y="426" width="91" height="1" fill="#C5E0B3"/><rect x="1054" y="439" width="91" height="1" fill="#C5E0B3"/><rect x="1054" y="452" width="91" height="1" fill="#C5E0B3"/><rect x="1054" y="465" width="91" height="1" fill="#C5E0B3"/><rect x="1054" y="478" width="91" height="1" fill="#C5E0B3"/><rect x="1054" y="491" width="91" height="1" fill="#C5E0B3"/><rect x="1054" y="426" width="1" height="66" fill="#C5E0B3"/><rect x="1072" y="426" width="1" height="66" fill="#C5E0B3"/><rect x="1090" y="426" width="1" height="66" fill="#C5E0B3"/><rect x="1108" y="426" width="1" height="66" fill="#C5E0B3"/><rect x="1126" y="426" width="1" height="66" fill="#C5E0B3"/><rect x="1144" y="426" width="1" height="66" fill="#C5E0B3"/><rect x="1054" y="439" width="91" height="2" fill="#A8D08D"/><rect x="1058" y="433" width="10" height="1" fill="#000"/><rect x="1076" y="433" width="10" height="1" fill="#000"/><rect x="1094" y="433" width="10" height="1" fill="#000"/><rect x="1112" y="433" width="10" height="1" fill="#000"/><rect x="1130" y="433" width="10" height="1" fill="#000"/><rect x="1058" y="446" width="10" height="1" fill="#000"/><rect x="1076" y="446" width="10" height="1" fill="#000"/><rect x="1094" y="446" width="10" height="1" fill="#000"/><rect x="1112" y="446" width="10" height="1" fill="#000"/><rect x="1130" y="446" width="10" height="1" fill="#000"/><rect x="1058" y="459" width="10" height="1" fill="#000"/><rect x="1076" y="459" width="10" height="1" fill="#000"/><rect x="1094" y="459" width="10" height="1" fill="#000"/><rect x="1112" y="459" width="10" height="1" fill="#000"/><rect x="1130" y="459" width="10" height="1" fill="#000"/><rect x="1058" y="472" width="10" height="1" fill="#000"/><rect x="1076" y="472" width="10" height="1" fill="#000"/><rect x="1094" y="472" width="10" height="1" fill="#000"/><rect x="1112" y="472" width="10" height="1" fill="#000"/><rect x="1130" y="472" width="10" height="1" fill="#000"/><rect x="1058" y="485" width="10" height="1" fill="#000"/><rect x="1076" y="485" width="10" height="1" fill="#000"/><rect x="1094" y="485" width="10" height="1" fill="#000"/><rect x="1112" y="485" width="10" height="1" fill="#000"/><rect x="1130" y="485" width="10" height="1" fill="#000"/><rect x="406" y="523" width="90" height="13" fill="#CCCCCC"/><rect x="406" y="549" width="90" height="13" fill="#CCCCCC"/><rect x="406" y="536" width="90" height="1" fill="#666666"/><rect x="406" y="549" width="90" height="1" fill="#666666"/><rect x="406" y="562" width="90" height="1" fill="#666666"/><rect x="406" y="575" width="90" height="1" fill="#666666"/><rect x="424" y="523" width="1" height="53" fill="#666666"/><rect x="442" y="523" width="1" height="53" fill="#666666"/><rect x="460" y="523" width="1" height="53" fill="#666666"/><rect x="478" y="523" width="1" height="53" fill="#666666"/><rect x="406" y="523" width="90" height="2" fill="#666666"/><rect x="410" y="517" width="10" height="1" fill="#000"/><rect x="428" y="517" width="10" height="1" fill="#000"/><rect x="446" y="517" width="10" height="1" fill="#000"/><rect x="464" y="517" width="10" height="1" fill="#000"/><rect x="482" y="517" width="10" height="1" fill="#000"/><rect x="410" y="530" width="10" height="1" fill="#000"/><rect x="428" y="530" width="10" height="1" fill="#000"/><rect x="446" y="530" width="10" height="1" fill="#000"/><rect x="464" y="530" width="10" height="1" fill="#000"/><rect x="482" y="530" width="10" height="1" fill="#000"/><rect x="410" y="543" width="10" height="1" fill="#000"/><rect x="428" y="543" width="10" height="1" fill="#000"/><rect x="446" y="543" width="10" height="1" fill="#000"/><rect x="464" y="543" width="10" height="1" fill="#000"/><rect x="482" y="543" width="10" height="1" fill="#000"/><rect x="410" y="556" width="10" height="1" fill="#000"/><rect x="428" y="556" width="10" height="1" fill="#000"/><rect x="446" y="556" width="10" height="1" fill="#000"/><rect x="464" y="556" width="10" height="1" fill="#000"/><rect x="482" y="556" width="10" height="1" fill="#000"/><rect x="410" y="569" width="10" height="1" fill="#000"/><rect x="428" y="569" width="10" height="1" fill="#000"/><rect x="446" y="569" width="10" height="1" fill="#000"/><rect x="464" y="569" width="10" height="1" fill="#000"/><rect x="482" y="569" width="10" height="1" fill="#000"/><rect x="514" y="523" width="90" height="13" fill="#D9E2F3"/><rect x="514" y="549" width="90" height="13" fill="#D9E2F3"/><rect x="514" y="536" width="90" height="1" fill="#8EAADB"/><rect x="514" y="549" width="90" height="1" fill="#8EAADB"/><rect x="514" y="562" width="90" height="1" fill="#8EAADB"/><rect x="514" y="575" width="90" height="1" fill="#8EAADB"/><rect x="532" y="523" width="1" height="53" fill="#8EAADB"/><rect x="550" y="523" width="1" height="53" fill="#8EAADB"/><rect x="568" y="523" width="1" height="53" fill="#8EAADB"/><rect x="586" y="523" width="1" height="53" fill="#8EAADB"/><rect x="514" y="523" width="90" height="2" fill="#8EAADB"/><rect x="518" y="517" width="10" height="1" fill="#000"/><rect x="536" y="517" width="10" height="1" fill="#000"/><rect x="554" y="517" width="10" height="1" fill="#000"/><rect x="572" y="517" width="10" height="1" fill="#000"/><rect x="590" y="517" width="10" height="1" fill="#000"/><rect x="518" y="530" width="10" height="1" fill="#000"/><rect x="536" y="530" width="10" height="1" fill="#000"/><rect x="554" y="530" width="10" height="1" fill="#000"/><rect x="572" y="530" width="10" height="1" fill="#000"/><rect x="590" y="530" width="10" height="1" fill="#000"/><rect x="518" y="543" width="10" height="1" fill="#000"/><rect x="536" y="543" width="10" height="1" fill="#000"/><rect x="554" y="543" width="10" height="1" fill="#000"/><rect x="572" y="543" width="10" height="1" fill="#000"/><rect x="590" y="543" width="10" height="1" fill="#000"/><rect x="518" y="556" width="10" height="1" fill="#000"/><rect x="536" y="556" width="10" height="1" fill="#000"/><rect x="554" y="556" width="10" height="1" fill="#000"/><rect x="572" y="556" width="10" height="1" fill="#000"/><rect x="590" y="556" width="10" height="1" fill="#000"/><rect x="518" y="569" width="10" height="1" fill="#000"/><rect x="536" y="569" width="10" height="1" fill="#000"/><rect x="554" y="569" width="10" height="1" fill="#000"/><rect x="572" y="569" width="10" height="1" fill="#000"/><rect x="590" y="569" width="10" height="1" fill="#000"/><rect x="622" y="523" width="90" height="13" fill="#FBE4D5"/><rect x="622" y="549" width="90" height="13" fill="#FBE4D5"/><rect x="622" y="536" width="90" height="1" fill="#F4B083"/><rect x="622" y="549" width="90" height="1" fill="#F4B083"/><rect x="622" y="562" width="90" height="1" fill="#F4B083"/><rect x="622" y="575" width="90" height="1" fill="#F4B083"/><rect x="640" y="523" width="1" height="53" fill="#F4B083"/><rect x="658" y="523" width="1" height="53" fill="#F4B083"/><rect x="676" y="523" width="1" height="53" fill="#F4B083"/><rect x="694" y="523" width="1" height="53" fill="#F4B083"/><rect x="622" y="523" width="90" height="2" fill="#F4B083"/><rect x="626" y="517" width="10" height="1" fill="#000"/><rect x="644" y="517" width="10" height="1" fill="#000"/><rect x="662" y="517" width="10" height="1" fill="#000"/><rect x="680" y="517" width="10" height="1" fill="#000"/><rect x="698" y="517" width="10" height="1" fill="#000"/><rect x="626" y="530" width="10" height="1" fill="#000"/><rect x="644" y="530" width="10" height="1" fill="#000"/><rect x="662" y="530" width="10" height="1" fill="#000"/><rect x="680" y="530" width="10" height="1" fill="#000"/><rect x="698" y="530" width="10" height="1" fill="#000"/><rect x="626" y="543" width="10" height="1" fill="#000"/><rect x="644" y="543" width="10" height="1" fill="#000"/><rect x="662" y="543" width="10" height="1" fill="#000"/><rect x="680" y="543" width="10" height="1" fill="#000"/><rect x="698" y="543" width="10" height="1" fill="#000"/><rect x="626" y="556" width="10" height="1" fill="#000"/><rect x="644" y="556" width="10" height="1" fill="#000"/><rect x="662" y="556" width="10" height="1" fill="#000"/><rect x="680" y="556" width="10" height="1" fill="#000"/><rect x="698" y="556" width="10" height="1" fill="#000"/><rect x="626" y="569" width="10" height="1" fill="#000"/><rect x="644" y="569" width="10" height="1" fill="#000"/><rect x="662" y="569" width="10" height="1" fill="#000"/><rect x="680" y="569" width="10" height="1" fill="#000"/><rect x="698" y="569" width="10" height="1" fill="#000"/><rect x="730" y="523" width="90" height="13" fill="#EDEDED"/><rect x="730" y="549" width="90" height="13" fill="#EDEDED"/><rect x="730" y="536" width="90" height="1" fill="#C9C9C9"/><rect x="730" y="549" width="90" height="1" fill="#C9C9C9"/><rect x="730" y="562" width="90" height="1" fill="#C9C9C9"/><rect x="730" y="575" width="90" height="1" fill="#C9C9C9"/><rect x="748" y="523" width="1" height="53" fill="#C9C9C9"/><rect x="766" y="523" width="1" height="53" fill="#C9C9C9"/><rect x="784" y="523" width="1" height="53" fill="#C9C9C9"/><rect x="802" y="523" width="1" height="53" fill="#C9C9C9"/><rect x="730" y="523" width="90" height="2" fill="#C9C9C9"/><rect x="734" y="517" width="10" height="1" fill="#000"/><rect x="752" y="517" width="10" height="1" fill="#000"/><rect x="770" y="517" width="10" height="1" fill="#000"/><rect x="788" y="517" width="10" height="1" fill="#000"/><rect x="806" y="517" width="10" height="1" fill="#000"/><rect x="734" y="530" width="10" height="1" fill="#000"/><rect x="752" y="530" width="10" height="1" fill="#000"/><rect x="770" y="530" width="10" height="1" fill="#000"/><rect x="788" y="530" width="10" height="1" fill="#000"/><rect x="806" y="530" width="10" height="1" fill="#000"/><rect x="734" y="543" width="10" height="1" fill="#000"/><rect x="752" y="543" width="10" height="1" fill="#000"/><rect x="770" y="543" width="10" height="1" fill="#000"/><rect x="788" y="543" width="10" height="1" fill="#000"/><rect x="806" y="543" width="10" height="1" fill="#000"/><rect x="734" y="556" width="10" height="1" fill="#000"/><rect x="752" y="556" width="10" height="1" fill="#000"/><rect x="770" y="556" width="10" height="1" fill="#000"/><rect x="788" y="556" width="10" height="1" fill="#000"/><rect x="806" y="556" width="10" height="1" fill="#000"/><rect x="734" y="569" width="10" height="1" fill="#000"/><rect x="752" y="569" width="10" height="1" fill="#000"/><rect x="770" y="569" width="10" height="1" fill="#000"/><rect x="788" y="569" width="10" height="1" fill="#000"/><rect x="806" y="569" width="10" height="1" fill="#000"/><rect x="838" y="523" width="90" height="13" fill="#FFF2CC"/><rect x="838" y="549" width="90" height="13" fill="#FFF2CC"/><rect x="838" y="536" width="90" height="1" fill="#FFD966"/><rect x="838" y="549" width="90" height="1" fill="#FFD966"/><rect x="838" y="562" width="90" height="1" fill="#FFD966"/><rect x="838" y="575" width="90" height="1" fill="#FFD966"/><rect x="856" y="523" width="1" height="53" fill="#FFD966"/><rect x="874" y="523" width="1" height="53" fill="#FFD966"/><rect x="892" y="523" width="1" height="53" fill="#FFD966"/><rect x="910" y="523" width="1" height="53" fill="#FFD966"/><rect x="838" y="523" width="90" height="2" fill="#FFD966"/><rect x="842" y="517" width="10" height="1" fill="#000"/><rect x="860" y="517" width="10" height="1" fill="#000"/><rect x="878" y="517" width="10" height="1" fill="#000"/><rect x="896" y="517" width="10" height="1" fill="#000"/><rect x="914" y="517" width="10" height="1" fill="#000"/><rect x="842" y="530" width="10" height="1" fill="#000"/><rect x="860" y="530" width="10" height="1" fill="#000"/><rect x="878" y="530" width="10" height="1" fill="#000"/><rect x="896" y="530" width="10" height="1" fill="#000"/><rect x="914" y="530" width="10" height="1" fill="#000"/><rect x="842" y="543" width="10" height="1" fill="#000"/><rect x="860" y="543" width="10" height="1" fill="#000"/><rect x="878" y="543" width="10" height="1" fill="#000"/><rect x="896" y="543" width="10" height="1" fill="#000"/><rect x="914" y="543" width="10" height="1" fill="#000"/><rect x="842" y="556" width="10" height="1" fill="#000"/><rect x="860" y="556" width="10" height="1" fill="#000"/><rect x="878" y="556" width="10" height="1" fill="#000"/><rect x="896" y="556" width="10" height="1" fill="#000"/><rect x="914" y="556" width="10" height="1" fill="#000"/><rect x="842" y="569" width="10" height="1" fill="#000"/><rect x="860" y="569" width="10" height="1" fill="#000"/><rect x="878" y="569" width="10" height="1" fill="#000"/><rect x="896" y="569" width="10" height="1" fill="#000"/><rect x="914" y="569" width="10" height="1" fill="#000"/><rect x="946" y="523" width="90" height="13" fill="#DEEAF6"/><rect x="946" y="549" width="90" height="13" fill="#DEEAF6"/><rect x="946" y="536" width="90" height="1" fill="#9CC2E5"/><rect x="946" y="549" width="90" height="1" fill="#9CC2E5"/><rect x="946" y="562" width="90" height="1" fill="#9CC2E5"/><rect x="946" y="575" width="90" height="1" fill="#9CC2E5"/><rect x="964" y="523" width="1" height="53" fill="#9CC2E5"/><rect x="982" y="523" width="1" height="53" fill="#9CC2E5"/><rect x="1000" y="523" width="1" height="53" fill="#9CC2E5"/><rect x="1018" y="523" width="1" height="53" fill="#9CC2E5"/><rect x="946" y="523" width="90" height="2" fill="#9CC2E5"/><rect x="950" y="517" width="10" height="1" fill="#000"/><rect x="968" y="517" width="10" height="1" fill="#000"/><rect x="986" y="517" width="10" height="1" fill="#000"/><rect x="1004" y="517" width="10" height="1" fill="#000"/><rect x="1022" y="517" width="10" height="1" fill="#000"/><rect x="950" y="530" width="10" height="1" fill="#000"/><rect x="968" y="530" width="10" height="1" fill="#000"/><rect x="986" y="530" width="10" height="1" fill="#000"/><rect x="1004" y="530" width="10" height="1" fill="#000"/><rect x="1022" y="530" width="10" height="1" fill="#000"/><rect x="950" y="543" width="10" height="1" fill="#000"/><rect x="968" y="543" width="10" height="1" fill="#000"/><rect x="986" y="543" width="10" height="1" fill="#000"/><rect x="1004" y="543" width="10" height="1" fill="#000"/><rect x="1022" y="543" width="10" height="1" fill="#000"/><rect x="950" y="556" width="10" height="1" fill="#000"/><rect x="968" y="556" width="10" height="1" fill="#000"/><rect x="986" y="556" width="10" height="1" fill="#000"/><rect x="1004" y="556" width="10" height="1" fill="#000"/><rect x="1022" y="556" width="10" height="1" fill="#000"/><rect x="950" y="569" width="10" height="1" fill="#000"/><rect x="968" y="569" width="10" height="1" fill="#000"/><rect x="986" y="569" width="10" height="1" fill="#000"/><rect x="1004" y="569" width="10" height="1" fill="#000"/><rect x="1022" y="569" width="10" height="1" fill="#000"/><rect x="1054" y="523" width="90" height="13" fill="#E2EFD9"/><rect x="1054" y="549" width="90" height="13" fill="#E2EFD9"/><rect x="1054" y="536" width="90" height="1" fill="#A8D08D"/><rect x="1054" y="549" width="90" height="1" fill="#A8D08D"/><rect x="1054" y="562" width="90" height="1" fill="#A8D08D"/><rect x="1054" y="575" width="90" height="1" fill="#A8D08D"/><rect x="1072" y="523" width="1" height="53" fill="#A8D08D"/><rect x="1090" y="523" width="1" height="53" fill="#A8D08D"/><rect x="1108" y="523" width="1" height="53" fill="#A8D08D"/><rect x="1126" y="523" width="1" height="53" fill="#A8D08D"/><rect x="1054" y="523" width="90" height="2" fill="#A8D08D"/><rect x="1058" y="517" width="10" height="1" fill="#000"/><rect x="1076" y="517" width="10" height="1" fill="#000"/><rect x="1094" y="517" width="10" height="1" fill="#000"/><rect x="1112" y="517" width="10" height="1" fill="#000"/><rect x="1130" y="517" width="10" height="1" fill="#000"/><rect x="1058" y="530" width="10" height="1" fill="#000"/><rect x="1076" y="530" width="10" height="1" fill="#000"/><rect x="1094" y="530" width="10" height="1" fill="#000"/><rect x="1112" y="530" width="10" height="1" fill="#000"/><rect x="1130" y="530" width="10" height="1" fill="#000"/><rect x="1058" y="543" width="10" height="1" fill="#000"/><rect x="1076" y="543" width="10" height="1" fill="#000"/><rect x="1094" y="543" width="10" height="1" fill="#000"/><rect x="1112" y="543" width="10" height="1" fill="#000"/><rect x="1130" y="543" width="10" height="1" fill="#000"/><rect x="1058" y="556" width="10" height="1" fill="#000"/><rect x="1076" y="556" width="10" height="1" fill="#000"/><rect x="1094" y="556" width="10" height="1" fill="#000"/><rect x="1112" y="556" width="10" height="1" fill="#000"/><rect x="1130" y="556" width="10" height="1" fill="#000"/><rect x="1058" y="569" width="10" height="1" fill="#000"/><rect x="1076" y="569" width="10" height="1" fill="#000"/><rect x="1094" y="569" width="10" height="1" fill="#000"/><rect x="1112" y="569" width="10" height="1" fill="#000"/><rect x="1130" y="569" width="10" height="1" fill="#000"/><rect x="424" y="607" width="73" height="13" fill="#CCCCCC"/><rect x="424" y="633" width="73" height="13" fill="#CCCCCC"/><rect x="406" y="607" width="91" height="1" fill="#666666"/><rect x="424" y="620" width="73" height="1" fill="#666666"/><rect x="424" y="633" width="73" height="1" fill="#666666"/><rect x="424" y="646" width="73" height="1" fill="#666666"/><rect x="424" y="659" width="73" height="1" fill="#666666"/><rect x="424" y="607" width="1" height="53" fill="#666666"/><rect x="442" y="607" width="1" height="53" fill="#666666"/><rect x="460" y="607" width="1" height="53" fill="#666666"/><rect x="478" y="607" width="1" height="53" fill="#666666"/><rect x="496" y="607" width="1" height="53" fill="#666666"/><rect x="410" y="601" width="10" height="1" fill="#000"/><rect x="428" y="601" width="10" height="1" fill="#000"/><rect x="446" y="601" width="10" height="1" fill="#000"/><rect x="464" y="601" width="10" height="1" fill="#000"/><rect x="482" y="601" width="10" height="1" fill="#000"/><rect x="410" y="614" width="10" height="1" fill="#000"/><rect x="428" y="614" width="10" height="1" fill="#000"/><rect x="446" y="614" width="10" height="1" fill="#000"/><rect x="464" y="614" width="10" height="1" fill="#000"/><rect x="482" y="614" width="10" height="1" fill="#000"/><rect x="410" y="627" width="10" height="1" fill="#000"/><rect x="428" y="627" width="10" height="1" fill="#000"/><rect x="446" y="627" width="10" height="1" fill="#000"/><rect x="464" y="627" width="10" height="1" fill="#000"/><rect x="482" y="627" width="10" height="1" fill="#000"/><rect x="410" y="640" width="10" height="1" fill="#000"/><rect x="428" y="640" width="10" height="1" fill="#000"/><rect x="446" y="640" width="10" height="1" fill="#000"/><rect x="464" y="640" width="10" height="1" fill="#000"/><rect x="482" y="640" width="10" height="1" fill="#000"/><rect x="410" y="653" width="10" height="1" fill="#000"/><rect x="428" y="653" width="10" height="1" fill="#000"/><rect x="446" y="653" width="10" height="1" fill="#000"/><rect x="464" y="653" width="10" height="1" fill="#000"/><rect x="482" y="653" width="10" height="1" fill="#000"/><rect x="532" y="607" width="73" height="13" fill="#D9E2F3"/><rect x="532" y="633" width="73" height="13" fill="#D9E2F3"/><rect x="514" y="607" width="91" height="1" fill="#8EAADB"/><rect x="532" y="620" width="73" height="1" fill="#8EAADB"/><rect x="532" y="633" width="73" height="1" fill="#8EAADB"/><rect x="532" y="646" width="73" height="1" fill="#8EAADB"/><rect x="532" y="659" width="73" height="1" fill="#8EAADB"/><rect x="532" y="607" width="1" height="53" fill="#8EAADB"/><rect x="550" y="607" width="1" height="53" fill="#8EAADB"/><rect x="568" y="607" width="1" height="53" fill="#8EAADB"/><rect x="586" y="607" width="1" height="53" fill="#8EAADB"/><rect x="604" y="607" width="1" height="53" fill="#8EAADB"/><rect x="518" y="601" width="10" height="1" fill="#000"/><rect x="536" y="601" width="10" height="1" fill="#000"/><rect x="554" y="601" width="10" height="1" fill="#000"/><rect x="572" y="601" width="10" height="1" fill="#000"/><rect x="590" y="601" width="10" height="1" fill="#000"/><rect x="518" y="614" width="10" height="1" fill="#000"/><rect x="536" y="614" width="10" height="1" fill="#000"/><rect x="554" y="614" width="10" height="1" fill="#000"/><rect x="572" y="614" width="10" height="1" fill="#000"/><rect x="590" y="614" width="10" height="1" fill="#000"/><rect x="518" y="627" width="10" height="1" fill="#000"/><rect x="536" y="627" width="10" height="1" fill="#000"/><rect x="554" y="627" width="10" height="1" fill="#000"/><rect x="572" y="627" width="10" height="1" fill="#000"/><rect x="590" y="627" width="10" height="1" fill="#000"/><rect x="518" y="640" width="10" height="1" fill="#000"/><rect x="536" y="640" width="10" height="1" fill="#000"/><rect x="554" y="640" width="10" height="1" fill="#000"/><rect x="572" y="640" width="10" height="1" fill="#000"/><rect x="590" y="640" width="10" height="1" fill="#000"/><rect x="518" y="653" width="10" height="1" fill="#000"/><rect x="536" y="653" width="10" height="1" fill="#000"/><rect x="554" y="653" width="10" height="1" fill="#000"/><rect x="572" y="653" width="10" height="1" fill="#000"/><rect x="590" y="653" width="10" height="1" fill="#000"/><rect x="640" y="607" width="73" height="13" fill="#FBE4D5"/><rect x="640" y="633" width="73" height="13" fill="#FBE4D5"/><rect x="622" y="607" width="91" height="1" fill="#F4B083"/><rect x="640" y="620" width="73" height="1" fill="#F4B083"/><rect x="640" y="633" width="73" height="1" fill="#F4B083"/><rect x="640" y="646" width="73" height="1" fill="#F4B083"/><rect x="640" y="659" width="73" height="1" fill="#F4B083"/><rect x="640" y="607" width="1" height="53" fill="#F4B083"/><rect x="658" y="607" width="1" height="53" fill="#F4B083"/><rect x="676" y="607" width="1" height="53" fill="#F4B083"/><rect x="694" y="607" width="1" height="53" fill="#F4B083"/><rect x="712" y="607" width="1" height="53" fill="#F4B083"/><rect x="626" y="601" width="10" height="1" fill="#000"/><rect x="644" y="601" width="10" height="1" fill="#000"/><rect x="662" y="601" width="10" height="1" fill="#000"/><rect x="680" y="601" width="10" height="1" fill="#000"/><rect x="698" y="601" width="10" height="1" fill="#000"/><rect x="626" y="614" width="10" height="1" fill="#000"/><rect x="644" y="614" width="10" height="1" fill="#000"/><rect x="662" y="614" width="10" height="1" fill="#000"/><rect x="680" y="614" width="10" height="1" fill="#000"/><rect x="698" y="614" width="10" height="1" fill="#000"/><rect x="626" y="627" width="10" height="1" fill="#000"/><rect x="644" y="627" width="10" height="1" fill="#000"/><rect x="662" y="627" width="10" height="1" fill="#000"/><rect x="680" y="627" width="10" height="1" fill="#000"/><rect x="698" y="627" width="10" height="1" fill="#000"/><rect x="626" y="640" width="10" height="1" fill="#000"/><rect x="644" y="640" width="10" height="1" fill="#000"/><rect x="662" y="640" width="10" height="1" fill="#000"/><rect x="680" y="640" width="10" height="1" fill="#000"/><rect x="698" y="640" width="10" height="1" fill="#000"/><rect x="626" y="653" width="10" height="1" fill="#000"/><rect x="644" y="653" width="10" height="1" fill="#000"/><rect x="662" y="653" width="10" height="1" fill="#000"/><rect x="680" y="653" width="10" height="1" fill="#000"/><rect x="698" y="653" width="10" height="1" fill="#000"/><rect x="748" y="607" width="73" height="13" fill="#EDEDED"/><rect x="748" y="633" width="73" height="13" fill="#EDEDED"/><rect x="730" y="607" width="91" height="1" fill="#C9C9C9"/><rect x="748" y="620" width="73" height="1" fill="#C9C9C9"/><rect x="748" y="633" width="73" height="1" fill="#C9C9C9"/><rect x="748" y="646" width="73" height="1" fill="#C9C9C9"/><rect x="748" y="659" width="73" height="1" fill="#C9C9C9"/><rect x="748" y="607" width="1" height="53" fill="#C9C9C9"/><rect x="766" y="607" width="1" height="53" fill="#C9C9C9"/><rect x="784" y="607" width="1" height="53" fill="#C9C9C9"/><rect x="802" y="607" width="1" height="53" fill="#C9C9C9"/><rect x="820" y="607" width="1" height="53" fill="#C9C9C9"/><rect x="734" y="601" width="10" height="1" fill="#000"/><rect x="752" y="601" width="10" height="1" fill="#000"/><rect x="770" y="601" width="10" height="1" fill="#000"/><rect x="788" y="601" width="10" height="1" fill="#000"/><rect x="806" y="601" width="10" height="1" fill="#000"/><rect x="734" y="614" width="10" height="1" fill="#000"/><rect x="752" y="614" width="10" height="1" fill="#000"/><rect x="770" y="614" width="10" height="1" fill="#000"/><rect x="788" y="614" width="10" height="1" fill="#000"/><rect x="806" y="614" width="10" height="1" fill="#000"/><rect x="734" y="627" width="10" height="1" fill="#000"/><rect x="752" y="627" width="10" height="1" fill="#000"/><rect x="770" y="627" width="10" height="1" fill="#000"/><rect x="788" y="627" width="10" height="1" fill="#000"/><rect x="806" y="627" width="10" height="1" fill="#000"/><rect x="734" y="640" width="10" height="1" fill="#000"/><rect x="752" y="640" width="10" height="1" fill="#000"/><rect x="770" y="640" width="10" height="1" fill="#000"/><rect x="788" y="640" width="10" height="1" fill="#000"/><rect x="806" y="640" width="10" height="1" fill="#000"/><rect x="734" y="653" width="10" height="1" fill="#000"/><rect x="752" y="653" width="10" height="1" fill="#000"/><rect x="770" y="653" width="10" height="1" fill="#000"/><rect x="788" y="653" width="10" height="1" fill="#000"/><rect x="806" y="653" width="10" height="1" fill="#000"/><rect x="856" y="607" width="73" height="13" fill="#FFF2CC"/><rect x="856" y="633" width="73" height="13" fill="#FFF2CC"/><rect x="838" y="607" width="91" height="1" fill="#FFD966"/><rect x="856" y="620" width="73" height="1" fill="#FFD966"/><rect x="856" y="633" width="73" height="1" fill="#FFD966"/><rect x="856" y="646" width="73" height="1" fill="#FFD966"/><rect x="856" y="659" width="73" height="1" fill="#FFD966"/><rect x="856" y="607" width="1" height="53" fill="#FFD966"/><rect x="874" y="607" width="1" height="53" fill="#FFD966"/><rect x="892" y="607" width="1" height="53" fill="#FFD966"/><rect x="910" y="607" width="1" height="53" fill="#FFD966"/><rect x="928" y="607" width="1" height="53" fill="#FFD966"/><rect x="842" y="601" width="10" height="1" fill="#000"/><rect x="860" y="601" width="10" height="1" fill="#000"/><rect x="878" y="601" width="10" height="1" fill="#000"/><rect x="896" y="601" width="10" height="1" fill="#000"/><rect x="914" y="601" width="10" height="1" fill="#000"/><rect x="842" y="614" width="10" height="1" fill="#000"/><rect x="860" y="614" width="10" height="1" fill="#000"/><rect x="878" y="614" width="10" height="1" fill="#000"/><rect x="896" y="614" width="10" height="1" fill="#000"/><rect x="914" y="614" width="10" height="1" fill="#000"/><rect x="842" y="627" width="10" height="1" fill="#000"/><rect x="860" y="627" width="10" height="1" fill="#000"/><rect x="878" y="627" width="10" height="1" fill="#000"/><rect x="896" y="627" width="10" height="1" fill="#000"/><rect x="914" y="627" width="10" height="1" fill="#000"/><rect x="842" y="640" width="10" height="1" fill="#000"/><rect x="860" y="640" width="10" height="1" fill="#000"/><rect x="878" y="640" width="10" height="1" fill="#000"/><rect x="896" y="640" width="10" height="1" fill="#000"/><rect x="914" y="640" width="10" height="1" fill="#000"/><rect x="842" y="653" width="10" height="1" fill="#000"/><rect x="860" y="653" width="10" height="1" fill="#000"/><rect x="878" y="653" width="10" height="1" fill="#000"/><rect x="896" y="653" width="10" height="1" fill="#000"/><rect x="914" y="653" width="10" height="1" fill="#000"/><rect x="964" y="607" width="73" height="13" fill="#DEEAF6"/><rect x="964" y="633" width="73" height="13" fill="#DEEAF6"/><rect x="946" y="607" width="91" height="1" fill="#9CC2E5"/><rect x="964" y="620" width="73" height="1" fill="#9CC2E5"/><rect x="964" y="633" width="73" height="1" fill="#9CC2E5"/><rect x="964" y="646" width="73" height="1" fill="#9CC2E5"/><rect x="964" y="659" width="73" height="1" fill="#9CC2E5"/><rect x="964" y="607" width="1" height="53" fill="#9CC2E5"/><rect x="982" y="607" width="1" height="53" fill="#9CC2E5"/><rect x="1000" y="607" width="1" height="53" fill="#9CC2E5"/><rect x="1018" y="607" width="1" height="53" fill="#9CC2E5"/><rect x="1036" y="607" width="1" height="53" fill="#9CC2E5"/><rect x="950" y="601" width="10" height="1" fill="#000"/><rect x="968" y="601" width="10" height="1" fill="#000"/><rect x="986" y="601" width="10" height="1" fill="#000"/><rect x="1004" y="601" width="10" height="1" fill="#000"/><rect x="1022" y="601" width="10" height="1" fill="#000"/><rect x="950" y="614" width="10" height="1" fill="#000"/><rect x="968" y="614" width="10" height="1" fill="#000"/><rect x="986" y="614" width="10" height="1" fill="#000"/><rect x="1004" y="614" width="10" height="1" fill="#000"/><rect x="1022" y="614" width="10" height="1" fill="#000"/><rect x="950" y="627" width="10" height="1" fill="#000"/><rect x="968" y="627" width="10" height="1" fill="#000"/><rect x="986" y="627" width="10" height="1" fill="#000"/><rect x="1004" y="627" width="10" height="1" fill="#000"/><rect x="1022" y="627" width="10" height="1" fill="#000"/><rect x="950" y="640" width="10" height="1" fill="#000"/><rect x="968" y="640" width="10" height="1" fill="#000"/><rect x="986" y="640" width="10" height="1" fill="#000"/><rect x="1004" y="640" width="10" height="1" fill="#000"/><rect x="1022" y="640" width="10" height="1" fill="#000"/><rect x="950" y="653" width="10" height="1" fill="#000"/><rect x="968" y="653" width="10" height="1" fill="#000"/><rect x="986" y="653" width="10" height="1" fill="#000"/><rect x="1004" y="653" width="10" height="1" fill="#000"/><rect x="1022" y="653" width="10" height="1" fill="#000"/><rect x="1072" y="607" width="73" height="13" fill="#E2EFD9"/><rect x="1072" y="633" width="73" height="13" fill="#E2EFD9"/><rect x="1054" y="607" width="91" height="1" fill="#A8D08D"/><rect x="1072" y="620" width="73" height="1" fill="#A8D08D"/><rect x="1072" y="633" width="73" height="1" fill="#A8D08D"/><rect x="1072" y="646" width="73" height="1" fill="#A8D08D"/><rect x="1072" y="659" width="73" height="1" fill="#A8D08D"/><rect x="1072" y="607" width="1" height="53" fill="#A8D08D"/><rect x="1090" y="607" width="1" height="53" fill="#A8D08D"/><rect x="1108" y="607" width="1" height="53" fill="#A8D08D"/><rect x="1126" y="607" width="1" height="53" fill="#A8D08D"/><rect x="1144" y="607" width="1" height="53" fill="#A8D08D"/><rect x="1058" y="601" width="10" height="1" fill="#000"/><rect x="1076" y="601" width="10" height="1" fill="#000"/><rect x="1094" y="601" width="10" height="1" fill="#000"/><rect x="1112" y="601" width="10" height="1" fill="#000"/><rect x="1130" y="601" width="10" height="1" fill="#000"/><rect x="1058" y="614" width="10" height="1" fill="#000"/><rect x="1076" y="614" width="10" height="1" fill="#000"/><rect x="1094" y="614" width="10" height="1" fill="#000"/><rect x="1112" y="614" width="10" height="1" fill="#000"/><rect x="1130" y="614" width="10" height="1" fill="#000"/><rect x="1058" y="627" width="10" height="1" fill="#000"/><rect x="1076" y="627" width="10" height="1" fill="#000"/><rect x="1094" y="627" width="10" height="1" fill="#000"/><rect x="1112" y="627" width="10" height="1" fill="#000"/><rect x="1130" y="627" width="10" height="1" fill="#000"/><rect x="1058" y="640" width="10" height="1" fill="#000"/><rect x="1076" y="640" width="10" height="1" fill="#000"/><rect x="1094" y="640" width="10" height="1" fill="#000"/><rect x="1112" y="640" width="10" height="1" fill="#000"/><rect x="1130" y="640" width="10" height="1" fill="#000"/><rect x="1058" y="653" width="10" height="1" fill="#000"/><rect x="1076" y="653" width="10" height="1" fill="#000"/><rect x="1094" y="653" width="10" height="1" fill="#000"/><rect x="1112" y="653" width="10" height="1" fill="#000"/><rect x="1130" y="653" width="10" height="1" fill="#000"/><rect x="406" y="691" width="91" height="13" fill="#CCCCCC"/><rect x="406" y="717" width="91" height="13" fill="#CCCCCC"/><rect x="406" y="678" width="91" height="1" fill="#666666"/><rect x="406" y="691" width="91" height="1" fill="#666666"/><rect x="406" y="704" width="91" height="1" fill="#666666"/><rect x="406" y="717" width="91" height="1" fill="#666666"/><rect x="406" y="730" width="91" height="1" fill="#666666"/><rect x="406" y="743" width="91" height="1" fill="#666666"/><rect x="406" y="678" width="1" height="66" fill="#666666"/><rect x="424" y="678" width="1" height="66" fill="#666666"/><rect x="442" y="678" width="1" height="66" fill="#666666"/><rect x="460" y="678" width="1" height="66" fill="#666666"/><rect x="478" y="678" width="1" height="66" fill="#666666"/><rect x="496" y="678" width="1" height="66" fill="#666666"/><rect x="406" y="678" width="91" height="14" fill="#000000"/><rect x="410" y="685" width="10" height="1" fill="#fff"/><rect x="428" y="685" width="10" height="1" fill="#fff"/><rect x="446" y="685" width="10" height="1" fill="#fff"/><rect x="464" y="685" width="10" height="1" fill="#fff"/><rect x="482" y="685" width="10" height="1" fill="#fff"/><rect x="410" y="698" width="10" height="1" fill="#000"/><rect x="428" y="698" width="10" height="1" fill="#000"/><rect x="446" y="698" width="10" height="1" fill="#000"/><rect x="464" y="698" width="10" height="1" fill="#000"/><rect x="482" y="698" width="10" height="1" fill="#000"/><rect x="410" y="711" width="10" height="1" fill="#000"/><rect x="428" y="711" width="10" height="1" fill="#000"/><rect x="446" y="711" width="10" height="1" fill="#000"/><rect x="464" y="711" width="10" height="1" fill="#000"/><rect x="482" y="711" width="10" height="1" fill="#000"/><rect x="410" y="724" width="10" height="1" fill="#000"/><rect x="428" y="724" width="10" height="1" fill="#000"/><rect x="446" y="724" width="10" height="1" fill="#000"/><rect x="464" y="724" width="10" height="1" fill="#000"/><rect x="482" y="724" width="10" height="1" fill="#000"/><rect x="410" y="737" width="10" height="1" fill="#000"/><rect x="428" y="737" width="10" height="1" fill="#000"/><rect x="446" y="737" width="10" height="1" fill="#000"/><rect x="464" y="737" width="10" height="1" fill="#000"/><rect x="482" y="737" width="10" height="1" fill="#000"/><rect x="514" y="691" width="91" height="13" fill="#D9E2F3"/><rect x="514" y="717" width="91" height="13" fill="#D9E2F3"/><rect x="514" y="678" width="91" height="1" fill="#8EAADB"/><rect x="514" y="691" width="91" height="1" fill="#8EAADB"/><rect x="514" y="704" width="91" height="1" fill="#8EAADB"/><rect x="514" y="717" width="91" height="1" fill="#8EAADB"/><rect x="514" y="730" width="91" height="1" fill="#8EAADB"/><rect x="514" y="743" width="91" height="1" fill="#8EAADB"/><rect x="514" y="678" width="1" height="66" fill="#8EAADB"/><rect x="532" y="678" width="1" height="66" fill="#8EAADB"/><rect x="550" y="678" width="1" height="66" fill="#8EAADB"/><rect x="568" y="678" width="1" height="66" fill="#8EAADB"/><rect x="586" y="678" width="1" height="66" fill="#8EAADB"/><rect x="604" y="678" width="1" height="66" fill="#8EAADB"/><rect x="514" y="678" width="91" height="14" fill="#4472C4"/><rect x="518" y="685" width="10" height="1" fill="#fff"/><rect x="536" y="685" width="10" height="1" fill="#fff"/><rect x="554" y="685" width="10" height="1" fill="#fff"/><rect x="572" y="685" width="10" height="1" fill="#fff"/><rect x="590" y="685" width="10" height="1" fill="#fff"/><rect x="518" y="698" width="10" height="1" fill="#000"/><rect x="536" y="698" width="10" height="1" fill="#000"/><rect x="554" y="698" width="10" height="1" fill="#000"/><rect x="572" y="698" width="10" height="1" fill="#000"/><rect x="590" y="698" width="10" height="1" fill="#000"/><rect x="518" y="711" width="10" height="1" fill="#000"/><rect x="536" y="711" width="10" height="1" fill="#000"/><rect x="554" y="711" width="10" height="1" fill="#000"/><rect x="572" y="711" width="10" height="1" fill="#000"/><rect x="590" y="711" width="10" height="1" fill="#000"/><rect x="518" y="724" width="10" height="1" fill="#000"/><rect x="536" y="724" width="10" height="1" fill="#000"/><rect x="554" y="724" width="10" height="1" fill="#000"/><rect x="572" y="724" width="10" height="1" fill="#000"/><rect x="590" y="724" width="10" height="1" fill="#000"/><rect x="518" y="737" width="10" height="1" fill="#000"/><rect x="536" y="737" width="10" height="1" fill="#000"/><rect x="554" y="737" width="10" height="1" fill="#000"/><rect x="572" y="737" width="10" height="1" fill="#000"/><rect x="590" y="737" width="10" height="1" fill="#000"/><rect x="622" y="691" width="91" height="13" fill="#FBE4D5"/><rect x="622" y="717" width="91" height="13" fill="#FBE4D5"/><rect x="622" y="678" width="91" height="1" fill="#F4B083"/><rect x="622" y="691" width="91" height="1" fill="#F4B083"/><rect x="622" y="704" width="91" height="1" fill="#F4B083"/><rect x="622" y="717" width="91" height="1" fill="#F4B083"/><rect x="622" y="730" width="91" height="1" fill="#F4B083"/><rect x="622" y="743" width="91" height="1" fill="#F4B083"/><rect x="622" y="678" width="1" height="66" fill="#F4B083"/><rect x="640" y="678" width="1" height="66" fill="#F4B083"/><rect x="658" y="678" width="1" height="66" fill="#F4B083"/><rect x="676" y="678" width="1" height="66" fill="#F4B083"/><rect x="694" y="678" width="1" height="66" fill="#F4B083"/><rect x="712" y="678" width="1" height="66" fill="#F4B083"/><rect x="622" y="678" width="91" height="14" fill="#ED7D31"/><rect x="626" y="685" width="10" height="1" fill="#fff"/><rect x="644" y="685" width="10" height="1" fill="#fff"/><rect x="662" y="685" width="10" height="1" fill="#fff"/><rect x="680" y="685" width="10" height="1" fill="#fff"/><rect x="698" y="685" width="10" height="1" fill="#fff"/><rect x="626" y="698" width="10" height="1" fill="#000"/><rect x="644" y="698" width="10" height="1" fill="#000"/><rect x="662" y="698" width="10" height="1" fill="#000"/><rect x="680" y="698" width="10" height="1" fill="#000"/><rect x="698" y="698" width="10" height="1" fill="#000"/><rect x="626" y="711" width="10" height="1" fill="#000"/><rect x="644" y="711" width="10" height="1" fill="#000"/><rect x="662" y="711" width="10" height="1" fill="#000"/><rect x="680" y="711" width="10" height="1" fill="#000"/><rect x="698" y="711" width="10" height="1" fill="#000"/><rect x="626" y="724" width="10" height="1" fill="#000"/><rect x="644" y="724" width="10" height="1" fill="#000"/><rect x="662" y="724" width="10" height="1" fill="#000"/><rect x="680" y="724" width="10" height="1" fill="#000"/><rect x="698" y="724" width="10" height="1" fill="#000"/><rect x="626" y="737" width="10" height="1" fill="#000"/><rect x="644" y="737" width="10" height="1" fill="#000"/><rect x="662" y="737" width="10" height="1" fill="#000"/><rect x="680" y="737" width="10" height="1" fill="#000"/><rect x="698" y="737" width="10" height="1" fill="#000"/><rect x="730" y="691" width="91" height="13" fill="#EDEDED"/><rect x="730" y="717" width="91" height="13" fill="#EDEDED"/><rect x="730" y="678" width="91" height="1" fill="#C9C9C9"/><rect x="730" y="691" width="91" height="1" fill="#C9C9C9"/><rect x="730" y="704" width="91" height="1" fill="#C9C9C9"/><rect x="730" y="717" width="91" height="1" fill="#C9C9C9"/><rect x="730" y="730" width="91" height="1" fill="#C9C9C9"/><rect x="730" y="743" width="91" height="1" fill="#C9C9C9"/><rect x="730" y="678" width="1" height="66" fill="#C9C9C9"/><rect x="748" y="678" width="1" height="66" fill="#C9C9C9"/><rect x="766" y="678" width="1" height="66" fill="#C9C9C9"/><rect x="784" y="678" width="1" height="66" fill="#C9C9C9"/><rect x="802" y="678" width="1" height="66" fill="#C9C9C9"/><rect x="820" y="678" width="1" height="66" fill="#C9C9C9"/><rect x="730" y="678" width="91" height="14" fill="#A5A5A5"/><rect x="734" y="685" width="10" height="1" fill="#fff"/><rect x="752" y="685" width="10" height="1" fill="#fff"/><rect x="770" y="685" width="10" height="1" fill="#fff"/><rect x="788" y="685" width="10" height="1" fill="#fff"/><rect x="806" y="685" width="10" height="1" fill="#fff"/><rect x="734" y="698" width="10" height="1" fill="#000"/><rect x="752" y="698" width="10" height="1" fill="#000"/><rect x="770" y="698" width="10" height="1" fill="#000"/><rect x="788" y="698" width="10" height="1" fill="#000"/><rect x="806" y="698" width="10" height="1" fill="#000"/><rect x="734" y="711" width="10" height="1" fill="#000"/><rect x="752" y="711" width="10" height="1" fill="#000"/><rect x="770" y="711" width="10" height="1" fill="#000"/><rect x="788" y="711" width="10" height="1" fill="#000"/><rect x="806" y="711" width="10" height="1" fill="#000"/><rect x="734" y="724" width="10" height="1" fill="#000"/><rect x="752" y="724" width="10" height="1" fill="#000"/><rect x="770" y="724" width="10" height="1" fill="#000"/><rect x="788" y="724" width="10" height="1" fill="#000"/><rect x="806" y="724" width="10" height="1" fill="#000"/><rect x="734" y="737" width="10" height="1" fill="#000"/><rect x="752" y="737" width="10" height="1" fill="#000"/><rect x="770" y="737" width="10" height="1" fill="#000"/><rect x="788" y="737" width="10" height="1" fill="#000"/><rect x="806" y="737" width="10" height="1" fill="#000"/><rect x="838" y="691" width="91" height="13" fill="#FFF2CC"/><rect x="838" y="717" width="91" height="13" fill="#FFF2CC"/><rect x="838" y="678" width="91" height="1" fill="#FFD966"/><rect x="838" y="691" width="91" height="1" fill="#FFD966"/><rect x="838" y="704" width="91" height="1" fill="#FFD966"/><rect x="838" y="717" width="91" height="1" fill="#FFD966"/><rect x="838" y="730" width="91" height="1" fill="#FFD966"/><rect x="838" y="743" width="91" height="1" fill="#FFD966"/><rect x="838" y="678" width="1" height="66" fill="#FFD966"/><rect x="856" y="678" width="1" height="66" fill="#FFD966"/><rect x="874" y="678" width="1" height="66" fill="#FFD966"/><rect x="892" y="678" width="1" height="66" fill="#FFD966"/><rect x="910" y="678" width="1" height="66" fill="#FFD966"/><rect x="928" y="678" width="1" height="66" fill="#FFD966"/><rect x="838" y="678" width="91" height="14" fill="#FFC000"/><rect x="842" y="685" width="10" height="1" fill="#fff"/><rect x="860" y="685" width="10" height="1" fill="#fff"/><rect x="878" y="685" width="10" height="1" fill="#fff"/><rect x="896" y="685" width="10" height="1" fill="#fff"/><rect x="914" y="685" width="10" height="1" fill="#fff"/><rect x="842" y="698" width="10" height="1" fill="#000"/><rect x="860" y="698" width="10" height="1" fill="#000"/><rect x="878" y="698" width="10" height="1" fill="#000"/><rect x="896" y="698" width="10" height="1" fill="#000"/><rect x="914" y="698" width="10" height="1" fill="#000"/><rect x="842" y="711" width="10" height="1" fill="#000"/><rect x="860" y="711" width="10" height="1" fill="#000"/><rect x="878" y="711" width="10" height="1" fill="#000"/><rect x="896" y="711" width="10" height="1" fill="#000"/><rect x="914" y="711" width="10" height="1" fill="#000"/><rect x="842" y="724" width="10" height="1" fill="#000"/><rect x="860" y="724" width="10" height="1" fill="#000"/><rect x="878" y="724" width="10" height="1" fill="#000"/><rect x="896" y="724" width="10" height="1" fill="#000"/><rect x="914" y="724" width="10" height="1" fill="#000"/><rect x="842" y="737" width="10" height="1" fill="#000"/><rect x="860" y="737" width="10" height="1" fill="#000"/><rect x="878" y="737" width="10" height="1" fill="#000"/><rect x="896" y="737" width="10" height="1" fill="#000"/><rect x="914" y="737" width="10" height="1" fill="#000"/><rect x="946" y="691" width="91" height="13" fill="#DEEAF6"/><rect x="946" y="717" width="91" height="13" fill="#DEEAF6"/><rect x="946" y="678" width="91" height="1" fill="#9CC2E5"/><rect x="946" y="691" width="91" height="1" fill="#9CC2E5"/><rect x="946" y="704" width="91" height="1" fill="#9CC2E5"/><rect x="946" y="717" width="91" height="1" fill="#9CC2E5"/><rect x="946" y="730" width="91" height="1" fill="#9CC2E5"/><rect x="946" y="743" width="91" height="1" fill="#9CC2E5"/><rect x="946" y="678" width="1" height="66" fill="#9CC2E5"/><rect x="964" y="678" width="1" height="66" fill="#9CC2E5"/><rect x="982" y="678" width="1" height="66" fill="#9CC2E5"/><rect x="1000" y="678" width="1" height="66" fill="#9CC2E5"/><rect x="1018" y="678" width="1" height="66" fill="#9CC2E5"/><rect x="1036" y="678" width="1" height="66" fill="#9CC2E5"/><rect x="946" y="678" width="91" height="14" fill="#5B9BD5"/><rect x="950" y="685" width="10" height="1" fill="#fff"/><rect x="968" y="685" width="10" height="1" fill="#fff"/><rect x="986" y="685" width="10" height="1" fill="#fff"/><rect x="1004" y="685" width="10" height="1" fill="#fff"/><rect x="1022" y="685" width="10" height="1" fill="#fff"/><rect x="950" y="698" width="10" height="1" fill="#000"/><rect x="968" y="698" width="10" height="1" fill="#000"/><rect x="986" y="698" width="10" height="1" fill="#000"/><rect x="1004" y="698" width="10" height="1" fill="#000"/><rect x="1022" y="698" width="10" height="1" fill="#000"/><rect x="950" y="711" width="10" height="1" fill="#000"/><rect x="968" y="711" width="10" height="1" fill="#000"/><rect x="986" y="711" width="10" height="1" fill="#000"/><rect x="1004" y="711" width="10" height="1" fill="#000"/><rect x="1022" y="711" width="10" height="1" fill="#000"/><rect x="950" y="724" width="10" height="1" fill="#000"/><rect x="968" y="724" width="10" height="1" fill="#000"/><rect x="986" y="724" width="10" height="1" fill="#000"/><rect x="1004" y="724" width="10" height="1" fill="#000"/><rect x="1022" y="724" width="10" height="1" fill="#000"/><rect x="950" y="737" width="10" height="1" fill="#000"/><rect x="968" y="737" width="10" height="1" fill="#000"/><rect x="986" y="737" width="10" height="1" fill="#000"/><rect x="1004" y="737" width="10" height="1" fill="#000"/><rect x="1022" y="737" width="10" height="1" fill="#000"/><rect x="1054" y="691" width="91" height="13" fill="#E2EFD9"/><rect x="1054" y="717" width="91" height="13" fill="#E2EFD9"/><rect x="1054" y="678" width="91" height="1" fill="#A8D08D"/><rect x="1054" y="691" width="91" height="1" fill="#A8D08D"/><rect x="1054" y="704" width="91" height="1" fill="#A8D08D"/><rect x="1054" y="717" width="91" height="1" fill="#A8D08D"/><rect x="1054" y="730" width="91" height="1" fill="#A8D08D"/><rect x="1054" y="743" width="91" height="1" fill="#A8D08D"/><rect x="1054" y="678" width="1" height="66" fill="#A8D08D"/><rect x="1072" y="678" width="1" height="66" fill="#A8D08D"/><rect x="1090" y="678" width="1" height="66" fill="#A8D08D"/><rect x="1108" y="678" width="1" height="66" fill="#A8D08D"/><rect x="1126" y="678" width="1" height="66" fill="#A8D08D"/><rect x="1144" y="678" width="1" height="66" fill="#A8D08D"/><rect x="1054" y="678" width="91" height="14" fill="#70AD47"/><rect x="1058" y="685" width="10" height="1" fill="#fff"/><rect x="1076" y="685" width="10" height="1" fill="#fff"/><rect x="1094" y="685" width="10" height="1" fill="#fff"/><rect x="1112" y="685" width="10" height="1" fill="#fff"/><rect x="1130" y="685" width="10" height="1" fill="#fff"/><rect x="1058" y="698" width="10" height="1" fill="#000"/><rect x="1076" y="698" width="10" height="1" fill="#000"/><rect x="1094" y="698" width="10" height="1" fill="#000"/><rect x="1112" y="698" width="10" height="1" fill="#000"/><rect x="1130" y="698" width="10" height="1" fill="#000"/><rect x="1058" y="711" width="10" height="1" fill="#000"/><rect x="1076" y="711" width="10" height="1" fill="#000"/><rect x="1094" y="711" width="10" height="1" fill="#000"/><rect x="1112" y="711" width="10" height="1" fill="#000"/><rect x="1130" y="711" width="10" height="1" fill="#000"/><rect x="1058" y="724" width="10" height="1" fill="#000"/><rect x="1076" y="724" width="10" height="1" fill="#000"/><rect x="1094" y="724" width="10" height="1" fill="#000"/><rect x="1112" y="724" width="10" height="1" fill="#000"/><rect x="1130" y="724" width="10" height="1" fill="#000"/><rect x="1058" y="737" width="10" height="1" fill="#000"/><rect x="1076" y="737" width="10" height="1" fill="#000"/><rect x="1094" y="737" width="10" height="1" fill="#000"/><rect x="1112" y="737" width="10" height="1" fill="#000"/><rect x="1130" y="737" width="10" height="1" fill="#000"/><rect x="407" y="763" width="89" height="12" fill="#000000"/><rect x="407" y="776" width="17" height="12" fill="#000000"/><rect x="425" y="776" width="17" height="12" fill="#999999"/><rect x="443" y="776" width="17" height="12" fill="#999999"/><rect x="461" y="776" width="17" height="12" fill="#999999"/><rect x="479" y="776" width="17" height="12" fill="#999999"/><rect x="407" y="789" width="17" height="12" fill="#000000"/><rect x="425" y="789" width="17" height="12" fill="#CCCCCC"/><rect x="443" y="789" width="17" height="12" fill="#CCCCCC"/><rect x="461" y="789" width="17" height="12" fill="#CCCCCC"/><rect x="479" y="789" width="17" height="12" fill="#CCCCCC"/><rect x="407" y="802" width="17" height="12" fill="#000000"/><rect x="425" y="802" width="17" height="12" fill="#999999"/><rect x="443" y="802" width="17" height="12" fill="#999999"/><rect x="461" y="802" width="17" height="12" fill="#999999"/><rect x="479" y="802" width="17" height="12" fill="#999999"/><rect x="407" y="815" width="17" height="12" fill="#000000"/><rect x="425" y="815" width="17" height="12" fill="#CCCCCC"/><rect x="443" y="815" width="17" height="12" fill="#CCCCCC"/><rect x="461" y="815" width="17" height="12" fill="#CCCCCC"/><rect x="479" y="815" width="17" height="12" fill="#CCCCCC"/><rect x="410" y="769" width="10" height="1" fill="#fff"/><rect x="428" y="769" width="10" height="1" fill="#fff"/><rect x="446" y="769" width="10" height="1" fill="#fff"/><rect x="464" y="769" width="10" height="1" fill="#fff"/><rect x="482" y="769" width="10" height="1" fill="#fff"/><rect x="410" y="782" width="10" height="1" fill="#fff"/><rect x="428" y="782" width="10" height="1" fill="#000"/><rect x="446" y="782" width="10" height="1" fill="#000"/><rect x="464" y="782" width="10" height="1" fill="#000"/><rect x="482" y="782" width="10" height="1" fill="#000"/><rect x="410" y="795" width="10" height="1" fill="#fff"/><rect x="428" y="795" width="10" height="1" fill="#000"/><rect x="446" y="795" width="10" height="1" fill="#000"/><rect x="464" y="795" width="10" height="1" fill="#000"/><rect x="482" y="795" width="10" height="1" fill="#000"/><rect x="410" y="808" width="10" height="1" fill="#fff"/><rect x="428" y="808" width="10" height="1" fill="#000"/><rect x="446" y="808" width="10" height="1" fill="#000"/><rect x="464" y="808" width="10" height="1" fill="#000"/><rect x="482" y="808" width="10" height="1" fill="#000"/><rect x="410" y="821" width="10" height="1" fill="#fff"/><rect x="428" y="821" width="10" height="1" fill="#000"/><rect x="446" y="821" width="10" height="1" fill="#000"/><rect x="464" y="821" width="10" height="1" fill="#000"/><rect x="482" y="821" width="10" height="1" fill="#000"/><rect x="515" y="763" width="89" height="12" fill="#4472C4"/><rect x="515" y="776" width="17" height="12" fill="#4472C4"/><rect x="533" y="776" width="17" height="12" fill="#B4C6E7"/><rect x="551" y="776" width="17" height="12" fill="#B4C6E7"/><rect x="569" y="776" width="17" height="12" fill="#B4C6E7"/><rect x="587" y="776" width="17" height="12" fill="#B4C6E7"/><rect x="515" y="789" width="17" height="12" fill="#4472C4"/><rect x="533" y="789" width="17" height="12" fill="#D9E2F3"/><rect x="551" y="789" width="17" height="12" fill="#D9E2F3"/><rect x="569" y="789" width="17" height="12" fill="#D9E2F3"/><rect x="587" y="789" width="17" height="12" fill="#D9E2F3"/><rect x="515" y="802" width="17" height="12" fill="#4472C4"/><rect x="533" y="802" width="17" height="12" fill="#B4C6E7"/><rect x="551" y="802" width="17" height="12" fill="#B4C6E7"/><rect x="569" y="802" width="17" height="12" fill="#B4C6E7"/><rect x="587" y="802" width="17" height="12" fill="#B4C6E7"/><rect x="515" y="815" width="17" height="12" fill="#4472C4"/><rect x="533" y="815" width="17" height="12" fill="#D9E2F3"/><rect x="551" y="815" width="17" height="12" fill="#D9E2F3"/><rect x="569" y="815" width="17" height="12" fill="#D9E2F3"/><rect x="587" y="815" width="17" height="12" fill="#D9E2F3"/><rect x="518" y="769" width="10" height="1" fill="#fff"/><rect x="536" y="769" width="10" height="1" fill="#fff"/><rect x="554" y="769" width="10" height="1" fill="#fff"/><rect x="572" y="769" width="10" height="1" fill="#fff"/><rect x="590" y="769" width="10" height="1" fill="#fff"/><rect x="518" y="782" width="10" height="1" fill="#fff"/><rect x="536" y="782" width="10" height="1" fill="#000"/><rect x="554" y="782" width="10" height="1" fill="#000"/><rect x="572" y="782" width="10" height="1" fill="#000"/><rect x="590" y="782" width="10" height="1" fill="#000"/><rect x="518" y="795" width="10" height="1" fill="#fff"/><rect x="536" y="795" width="10" height="1" fill="#000"/><rect x="554" y="795" width="10" height="1" fill="#000"/><rect x="572" y="795" width="10" height="1" fill="#000"/><rect x="590" y="795" width="10" height="1" fill="#000"/><rect x="518" y="808" width="10" height="1" fill="#fff"/><rect x="536" y="808" width="10" height="1" fill="#000"/><rect x="554" y="808" width="10" height="1" fill="#000"/><rect x="572" y="808" width="10" height="1" fill="#000"/><rect x="590" y="808" width="10" height="1" fill="#000"/><rect x="518" y="821" width="10" height="1" fill="#fff"/><rect x="536" y="821" width="10" height="1" fill="#000"/><rect x="554" y="821" width="10" height="1" fill="#000"/><rect x="572" y="821" width="10" height="1" fill="#000"/><rect x="590" y="821" width="10" height="1" fill="#000"/><rect x="623" y="763" width="89" height="12" fill="#ED7D31"/><rect x="623" y="776" width="17" height="12" fill="#ED7D31"/><rect x="641" y="776" width="17" height="12" fill="#F7CAAC"/><rect x="659" y="776" width="17" height="12" fill="#F7CAAC"/><rect x="677" y="776" width="17" height="12" fill="#F7CAAC"/><rect x="695" y="776" width="17" height="12" fill="#F7CAAC"/><rect x="623" y="789" width="17" height="12" fill="#ED7D31"/><rect x="641" y="789" width="17" height="12" fill="#FBE4D5"/><rect x="659" y="789" width="17" height="12" fill="#FBE4D5"/><rect x="677" y="789" width="17" height="12" fill="#FBE4D5"/><rect x="695" y="789" width="17" height="12" fill="#FBE4D5"/><rect x="623" y="802" width="17" height="12" fill="#ED7D31"/><rect x="641" y="802" width="17" height="12" fill="#F7CAAC"/><rect x="659" y="802" width="17" height="12" fill="#F7CAAC"/><rect x="677" y="802" width="17" height="12" fill="#F7CAAC"/><rect x="695" y="802" width="17" height="12" fill="#F7CAAC"/><rect x="623" y="815" width="17" height="12" fill="#ED7D31"/><rect x="641" y="815" width="17" height="12" fill="#FBE4D5"/><rect x="659" y="815" width="17" height="12" fill="#FBE4D5"/><rect x="677" y="815" width="17" height="12" fill="#FBE4D5"/><rect x="695" y="815" width="17" height="12" fill="#FBE4D5"/><rect x="626" y="769" width="10" height="1" fill="#fff"/><rect x="644" y="769" width="10" height="1" fill="#fff"/><rect x="662" y="769" width="10" height="1" fill="#fff"/><rect x="680" y="769" width="10" height="1" fill="#fff"/><rect x="698" y="769" width="10" height="1" fill="#fff"/><rect x="626" y="782" width="10" height="1" fill="#fff"/><rect x="644" y="782" width="10" height="1" fill="#000"/><rect x="662" y="782" width="10" height="1" fill="#000"/><rect x="680" y="782" width="10" height="1" fill="#000"/><rect x="698" y="782" width="10" height="1" fill="#000"/><rect x="626" y="795" width="10" height="1" fill="#fff"/><rect x="644" y="795" width="10" height="1" fill="#000"/><rect x="662" y="795" width="10" height="1" fill="#000"/><rect x="680" y="795" width="10" height="1" fill="#000"/><rect x="698" y="795" width="10" height="1" fill="#000"/><rect x="626" y="808" width="10" height="1" fill="#fff"/><rect x="644" y="808" width="10" height="1" fill="#000"/><rect x="662" y="808" width="10" height="1" fill="#000"/><rect x="680" y="808" width="10" height="1" fill="#000"/><rect x="698" y="808" width="10" height="1" fill="#000"/><rect x="626" y="821" width="10" height="1" fill="#fff"/><rect x="644" y="821" width="10" height="1" fill="#000"/><rect x="662" y="821" width="10" height="1" fill="#000"/><rect x="680" y="821" width="10" height="1" fill="#000"/><rect x="698" y="821" width="10" height="1" fill="#000"/><rect x="731" y="763" width="89" height="12" fill="#A5A5A5"/><rect x="731" y="776" width="17" height="12" fill="#A5A5A5"/><rect x="749" y="776" width="17" height="12" fill="#DBDBDB"/><rect x="767" y="776" width="17" height="12" fill="#DBDBDB"/><rect x="785" y="776" width="17" height="12" fill="#DBDBDB"/><rect x="803" y="776" width="17" height="12" fill="#DBDBDB"/><rect x="731" y="789" width="17" height="12" fill="#A5A5A5"/><rect x="749" y="789" width="17" height="12" fill="#EDEDED"/><rect x="767" y="789" width="17" height="12" fill="#EDEDED"/><rect x="785" y="789" width="17" height="12" fill="#EDEDED"/><rect x="803" y="789" width="17" height="12" fill="#EDEDED"/><rect x="731" y="802" width="17" height="12" fill="#A5A5A5"/><rect x="749" y="802" width="17" height="12" fill="#DBDBDB"/><rect x="767" y="802" width="17" height="12" fill="#DBDBDB"/><rect x="785" y="802" width="17" height="12" fill="#DBDBDB"/><rect x="803" y="802" width="17" height="12" fill="#DBDBDB"/><rect x="731" y="815" width="17" height="12" fill="#A5A5A5"/><rect x="749" y="815" width="17" height="12" fill="#EDEDED"/><rect x="767" y="815" width="17" height="12" fill="#EDEDED"/><rect x="785" y="815" width="17" height="12" fill="#EDEDED"/><rect x="803" y="815" width="17" height="12" fill="#EDEDED"/><rect x="734" y="769" width="10" height="1" fill="#fff"/><rect x="752" y="769" width="10" height="1" fill="#fff"/><rect x="770" y="769" width="10" height="1" fill="#fff"/><rect x="788" y="769" width="10" height="1" fill="#fff"/><rect x="806" y="769" width="10" height="1" fill="#fff"/><rect x="734" y="782" width="10" height="1" fill="#fff"/><rect x="752" y="782" width="10" height="1" fill="#000"/><rect x="770" y="782" width="10" height="1" fill="#000"/><rect x="788" y="782" width="10" height="1" fill="#000"/><rect x="806" y="782" width="10" height="1" fill="#000"/><rect x="734" y="795" width="10" height="1" fill="#fff"/><rect x="752" y="795" width="10" height="1" fill="#000"/><rect x="770" y="795" width="10" height="1" fill="#000"/><rect x="788" y="795" width="10" height="1" fill="#000"/><rect x="806" y="795" width="10" height="1" fill="#000"/><rect x="734" y="808" width="10" height="1" fill="#fff"/><rect x="752" y="808" width="10" height="1" fill="#000"/><rect x="770" y="808" width="10" height="1" fill="#000"/><rect x="788" y="808" width="10" height="1" fill="#000"/><rect x="806" y="808" width="10" height="1" fill="#000"/><rect x="734" y="821" width="10" height="1" fill="#fff"/><rect x="752" y="821" width="10" height="1" fill="#000"/><rect x="770" y="821" width="10" height="1" fill="#000"/><rect x="788" y="821" width="10" height="1" fill="#000"/><rect x="806" y="821" width="10" height="1" fill="#000"/><rect x="839" y="763" width="89" height="12" fill="#FFC000"/><rect x="839" y="776" width="17" height="12" fill="#FFC000"/><rect x="857" y="776" width="17" height="12" fill="#FFE599"/><rect x="875" y="776" width="17" height="12" fill="#FFE599"/><rect x="893" y="776" width="17" height="12" fill="#FFE599"/><rect x="911" y="776" width="17" height="12" fill="#FFE599"/><rect x="839" y="789" width="17" height="12" fill="#FFC000"/><rect x="857" y="789" width="17" height="12" fill="#FFF2CC"/><rect x="875" y="789" width="17" height="12" fill="#FFF2CC"/><rect x="893" y="789" width="17" height="12" fill="#FFF2CC"/><rect x="911" y="789" width="17" height="12" fill="#FFF2CC"/><rect x="839" y="802" width="17" height="12" fill="#FFC000"/><rect x="857" y="802" width="17" height="12" fill="#FFE599"/><rect x="875" y="802" width="17" height="12" fill="#FFE599"/><rect x="893" y="802" width="17" height="12" fill="#FFE599"/><rect x="911" y="802" width="17" height="12" fill="#FFE599"/><rect x="839" y="815" width="17" height="12" fill="#FFC000"/><rect x="857" y="815" width="17" height="12" fill="#FFF2CC"/><rect x="875" y="815" width="17" height="12" fill="#FFF2CC"/><rect x="893" y="815" width="17" height="12" fill="#FFF2CC"/><rect x="911" y="815" width="17" height="12" fill="#FFF2CC"/><rect x="842" y="769" width="10" height="1" fill="#fff"/><rect x="860" y="769" width="10" height="1" fill="#fff"/><rect x="878" y="769" width="10" height="1" fill="#fff"/><rect x="896" y="769" width="10" height="1" fill="#fff"/><rect x="914" y="769" width="10" height="1" fill="#fff"/><rect x="842" y="782" width="10" height="1" fill="#fff"/><rect x="860" y="782" width="10" height="1" fill="#000"/><rect x="878" y="782" width="10" height="1" fill="#000"/><rect x="896" y="782" width="10" height="1" fill="#000"/><rect x="914" y="782" width="10" height="1" fill="#000"/><rect x="842" y="795" width="10" height="1" fill="#fff"/><rect x="860" y="795" width="10" height="1" fill="#000"/><rect x="878" y="795" width="10" height="1" fill="#000"/><rect x="896" y="795" width="10" height="1" fill="#000"/><rect x="914" y="795" width="10" height="1" fill="#000"/><rect x="842" y="808" width="10" height="1" fill="#fff"/><rect x="860" y="808" width="10" height="1" fill="#000"/><rect x="878" y="808" width="10" height="1" fill="#000"/><rect x="896" y="808" width="10" height="1" fill="#000"/><rect x="914" y="808" width="10" height="1" fill="#000"/><rect x="842" y="821" width="10" height="1" fill="#fff"/><rect x="860" y="821" width="10" height="1" fill="#000"/><rect x="878" y="821" width="10" height="1" fill="#000"/><rect x="896" y="821" width="10" height="1" fill="#000"/><rect x="914" y="821" width="10" height="1" fill="#000"/><rect x="947" y="763" width="89" height="12" fill="#5B9BD5"/><rect x="947" y="776" width="17" height="12" fill="#5B9BD5"/><rect x="965" y="776" width="17" height="12" fill="#BDD6EE"/><rect x="983" y="776" width="17" height="12" fill="#BDD6EE"/><rect x="1001" y="776" width="17" height="12" fill="#BDD6EE"/><rect x="1019" y="776" width="17" height="12" fill="#BDD6EE"/><rect x="947" y="789" width="17" height="12" fill="#5B9BD5"/><rect x="965" y="789" width="17" height="12" fill="#DEEAF6"/><rect x="983" y="789" width="17" height="12" fill="#DEEAF6"/><rect x="1001" y="789" width="17" height="12" fill="#DEEAF6"/><rect x="1019" y="789" width="17" height="12" fill="#DEEAF6"/><rect x="947" y="802" width="17" height="12" fill="#5B9BD5"/><rect x="965" y="802" width="17" height="12" fill="#BDD6EE"/><rect x="983" y="802" width="17" height="12" fill="#BDD6EE"/><rect x="1001" y="802" width="17" height="12" fill="#BDD6EE"/><rect x="1019" y="802" width="17" height="12" fill="#BDD6EE"/><rect x="947" y="815" width="17" height="12" fill="#5B9BD5"/><rect x="965" y="815" width="17" height="12" fill="#DEEAF6"/><rect x="983" y="815" width="17" height="12" fill="#DEEAF6"/><rect x="1001" y="815" width="17" height="12" fill="#DEEAF6"/><rect x="1019" y="815" width="17" height="12" fill="#DEEAF6"/><rect x="950" y="769" width="10" height="1" fill="#fff"/><rect x="968" y="769" width="10" height="1" fill="#fff"/><rect x="986" y="769" width="10" height="1" fill="#fff"/><rect x="1004" y="769" width="10" height="1" fill="#fff"/><rect x="1022" y="769" width="10" height="1" fill="#fff"/><rect x="950" y="782" width="10" height="1" fill="#fff"/><rect x="968" y="782" width="10" height="1" fill="#000"/><rect x="986" y="782" width="10" height="1" fill="#000"/><rect x="1004" y="782" width="10" height="1" fill="#000"/><rect x="1022" y="782" width="10" height="1" fill="#000"/><rect x="950" y="795" width="10" height="1" fill="#fff"/><rect x="968" y="795" width="10" height="1" fill="#000"/><rect x="986" y="795" width="10" height="1" fill="#000"/><rect x="1004" y="795" width="10" height="1" fill="#000"/><rect x="1022" y="795" width="10" height="1" fill="#000"/><rect x="950" y="808" width="10" height="1" fill="#fff"/><rect x="968" y="808" width="10" height="1" fill="#000"/><rect x="986" y="808" width="10" height="1" fill="#000"/><rect x="1004" y="808" width="10" height="1" fill="#000"/><rect x="1022" y="808" width="10" height="1" fill="#000"/><rect x="950" y="821" width="10" height="1" fill="#fff"/><rect x="968" y="821" width="10" height="1" fill="#000"/><rect x="986" y="821" width="10" height="1" fill="#000"/><rect x="1004" y="821" width="10" height="1" fill="#000"/><rect x="1022" y="821" width="10" height="1" fill="#000"/><rect x="1055" y="763" width="89" height="12" fill="#70AD47"/><rect x="1055" y="776" width="17" height="12" fill="#70AD47"/><rect x="1073" y="776" width="17" height="12" fill="#C5E0B3"/><rect x="1091" y="776" width="17" height="12" fill="#C5E0B3"/><rect x="1109" y="776" width="17" height="12" fill="#C5E0B3"/><rect x="1127" y="776" width="17" height="12" fill="#C5E0B3"/><rect x="1055" y="789" width="17" height="12" fill="#70AD47"/><rect x="1073" y="789" width="17" height="12" fill="#E2EFD9"/><rect x="1091" y="789" width="17" height="12" fill="#E2EFD9"/><rect x="1109" y="789" width="17" height="12" fill="#E2EFD9"/><rect x="1127" y="789" width="17" height="12" fill="#E2EFD9"/><rect x="1055" y="802" width="17" height="12" fill="#70AD47"/><rect x="1073" y="802" width="17" height="12" fill="#C5E0B3"/><rect x="1091" y="802" width="17" height="12" fill="#C5E0B3"/><rect x="1109" y="802" width="17" height="12" fill="#C5E0B3"/><rect x="1127" y="802" width="17" height="12" fill="#C5E0B3"/><rect x="1055" y="815" width="17" height="12" fill="#70AD47"/><rect x="1073" y="815" width="17" height="12" fill="#E2EFD9"/><rect x="1091" y="815" width="17" height="12" fill="#E2EFD9"/><rect x="1109" y="815" width="17" height="12" fill="#E2EFD9"/><rect x="1127" y="815" width="17" height="12" fill="#E2EFD9"/><rect x="1058" y="769" width="10" height="1" fill="#fff"/><rect x="1076" y="769" width="10" height="1" fill="#fff"/><rect x="1094" y="769" width="10" height="1" fill="#fff"/><rect x="1112" y="769" width="10" height="1" fill="#fff"/><rect x="1130" y="769" width="10" height="1" fill="#fff"/><rect x="1058" y="782" width="10" height="1" fill="#fff"/><rect x="1076" y="782" width="10" height="1" fill="#000"/><rect x="1094" y="782" width="10" height="1" fill="#000"/><rect x="1112" y="782" width="10" height="1" fill="#000"/><rect x="1130" y="782" width="10" height="1" fill="#000"/><rect x="1058" y="795" width="10" height="1" fill="#fff"/><rect x="1076" y="795" width="10" height="1" fill="#000"/><rect x="1094" y="795" width="10" height="1" fill="#000"/><rect x="1112" y="795" width="10" height="1" fill="#000"/><rect x="1130" y="795" width="10" height="1" fill="#000"/><rect x="1058" y="808" width="10" height="1" fill="#fff"/><rect x="1076" y="808" width="10" height="1" fill="#000"/><rect x="1094" y="808" width="10" height="1" fill="#000"/><rect x="1112" y="808" width="10" height="1" fill="#000"/><rect x="1130" y="808" width="10" height="1" fill="#000"/><rect x="1058" y="821" width="10" height="1" fill="#fff"/><rect x="1076" y="821" width="10" height="1" fill="#000"/><rect x="1094" y="821" width="10" height="1" fill="#000"/><rect x="1112" y="821" width="10" height="1" fill="#000"/><rect x="1130" y="821" width="10" height="1" fill="#000"/><rect x="406" y="859" width="91" height="13" fill="#CCCCCC"/><rect x="406" y="885" width="91" height="13" fill="#CCCCCC"/><rect x="406" y="846" width="91" height="1" fill="#666666"/><rect x="406" y="859" width="91" height="1" fill="#666666"/><rect x="406" y="872" width="91" height="1" fill="#666666"/><rect x="406" y="885" width="91" height="1" fill="#666666"/><rect x="406" y="898" width="91" height="1" fill="#666666"/><rect x="406" y="911" width="91" height="1" fill="#666666"/><rect x="406" y="846" width="1" height="66" fill="#666666"/><rect x="424" y="846" width="1" height="66" fill="#666666"/><rect x="442" y="846" width="1" height="66" fill="#666666"/><rect x="460" y="846" width="1" height="66" fill="#666666"/><rect x="478" y="846" width="1" height="66" fill="#666666"/><rect x="496" y="846" width="1" height="66" fill="#666666"/><rect x="406" y="859" width="91" height="2" fill="#666666"/><rect x="410" y="853" width="10" height="1" fill="#000000"/><rect x="428" y="853" width="10" height="1" fill="#000000"/><rect x="446" y="853" width="10" height="1" fill="#000000"/><rect x="464" y="853" width="10" height="1" fill="#000000"/><rect x="482" y="853" width="10" height="1" fill="#000000"/><rect x="410" y="866" width="10" height="1" fill="#000000"/><rect x="428" y="866" width="10" height="1" fill="#000000"/><rect x="446" y="866" width="10" height="1" fill="#000000"/><rect x="464" y="866" width="10" height="1" fill="#000000"/><rect x="482" y="866" width="10" height="1" fill="#000000"/><rect x="410" y="879" width="10" height="1" fill="#000000"/><rect x="428" y="879" width="10" height="1" fill="#000000"/><rect x="446" y="879" width="10" height="1" fill="#000000"/><rect x="464" y="879" width="10" height="1" fill="#000000"/><rect x="482" y="879" width="10" height="1" fill="#000000"/><rect x="410" y="892" width="10" height="1" fill="#000000"/><rect x="428" y="892" width="10" height="1" fill="#000000"/><rect x="446" y="892" width="10" height="1" fill="#000000"/><rect x="464" y="892" width="10" height="1" fill="#000000"/><rect x="482" y="892" width="10" height="1" fill="#000000"/><rect x="410" y="905" width="10" height="1" fill="#000000"/><rect x="428" y="905" width="10" height="1" fill="#000000"/><rect x="446" y="905" width="10" height="1" fill="#000000"/><rect x="464" y="905" width="10" height="1" fill="#000000"/><rect x="482" y="905" width="10" height="1" fill="#000000"/><rect x="514" y="859" width="91" height="13" fill="#D9E2F3"/><rect x="514" y="885" width="91" height="13" fill="#D9E2F3"/><rect x="514" y="846" width="91" height="1" fill="#8EAADB"/><rect x="514" y="859" width="91" height="1" fill="#8EAADB"/><rect x="514" y="872" width="91" height="1" fill="#8EAADB"/><rect x="514" y="885" width="91" height="1" fill="#8EAADB"/><rect x="514" y="898" width="91" height="1" fill="#8EAADB"/><rect x="514" y="911" width="91" height="1" fill="#8EAADB"/><rect x="514" y="846" width="1" height="66" fill="#8EAADB"/><rect x="532" y="846" width="1" height="66" fill="#8EAADB"/><rect x="550" y="846" width="1" height="66" fill="#8EAADB"/><rect x="568" y="846" width="1" height="66" fill="#8EAADB"/><rect x="586" y="846" width="1" height="66" fill="#8EAADB"/><rect x="604" y="846" width="1" height="66" fill="#8EAADB"/><rect x="514" y="859" width="91" height="2" fill="#8EAADB"/><rect x="518" y="853" width="10" height="1" fill="#2F5496"/><rect x="536" y="853" width="10" height="1" fill="#2F5496"/><rect x="554" y="853" width="10" height="1" fill="#2F5496"/><rect x="572" y="853" width="10" height="1" fill="#2F5496"/><rect x="590" y="853" width="10" height="1" fill="#2F5496"/><rect x="518" y="866" width="10" height="1" fill="#2F5496"/><rect x="536" y="866" width="10" height="1" fill="#2F5496"/><rect x="554" y="866" width="10" height="1" fill="#2F5496"/><rect x="572" y="866" width="10" height="1" fill="#2F5496"/><rect x="590" y="866" width="10" height="1" fill="#2F5496"/><rect x="518" y="879" width="10" height="1" fill="#2F5496"/><rect x="536" y="879" width="10" height="1" fill="#2F5496"/><rect x="554" y="879" width="10" height="1" fill="#2F5496"/><rect x="572" y="879" width="10" height="1" fill="#2F5496"/><rect x="590" y="879" width="10" height="1" fill="#2F5496"/><rect x="518" y="892" width="10" height="1" fill="#2F5496"/><rect x="536" y="892" width="10" height="1" fill="#2F5496"/><rect x="554" y="892" width="10" height="1" fill="#2F5496"/><rect x="572" y="892" width="10" height="1" fill="#2F5496"/><rect x="590" y="892" width="10" height="1" fill="#2F5496"/><rect x="518" y="905" width="10" height="1" fill="#2F5496"/><rect x="536" y="905" width="10" height="1" fill="#2F5496"/><rect x="554" y="905" width="10" height="1" fill="#2F5496"/><rect x="572" y="905" width="10" height="1" fill="#2F5496"/><rect x="590" y="905" width="10" height="1" fill="#2F5496"/><rect x="622" y="859" width="91" height="13" fill="#FBE4D5"/><rect x="622" y="885" width="91" height="13" fill="#FBE4D5"/><rect x="622" y="846" width="91" height="1" fill="#F4B083"/><rect x="622" y="859" width="91" height="1" fill="#F4B083"/><rect x="622" y="872" width="91" height="1" fill="#F4B083"/><rect x="622" y="885" width="91" height="1" fill="#F4B083"/><rect x="622" y="898" width="91" height="1" fill="#F4B083"/><rect x="622" y="911" width="91" height="1" fill="#F4B083"/><rect x="622" y="846" width="1" height="66" fill="#F4B083"/><rect x="640" y="846" width="1" height="66" fill="#F4B083"/><rect x="658" y="846" width="1" height="66" fill="#F4B083"/><rect x="676" y="846" width="1" height="66" fill="#F4B083"/><rect x="694" y="846" width="1" height="66" fill="#F4B083"/><rect x="712" y="846" width="1" height="66" fill="#F4B083"/><rect x="622" y="859" width="91" height="2" fill="#F4B083"/><rect x="626" y="853" width="10" height="1" fill="#C45911"/><rect x="644" y="853" width="10" height="1" fill="#C45911"/><rect x="662" y="853" width="10" height="1" fill="#C45911"/><rect x="680" y="853" width="10" height="1" fill="#C45911"/><rect x="698" y="853" width="10" height="1" fill="#C45911"/><rect x="626" y="866" width="10" height="1" fill="#C45911"/><rect x="644" y="866" width="10" height="1" fill="#C45911"/><rect x="662" y="866" width="10" height="1" fill="#C45911"/><rect x="680" y="866" width="10" height="1" fill="#C45911"/><rect x="698" y="866" width="10" height="1" fill="#C45911"/><rect x="626" y="879" width="10" height="1" fill="#C45911"/><rect x="644" y="879" width="10" height="1" fill="#C45911"/><rect x="662" y="879" width="10" height="1" fill="#C45911"/><rect x="680" y="879" width="10" height="1" fill="#C45911"/><rect x="698" y="879" width="10" height="1" fill="#C45911"/><rect x="626" y="892" width="10" height="1" fill="#C45911"/><rect x="644" y="892" width="10" height="1" fill="#C45911"/><rect x="662" y="892" width="10" height="1" fill="#C45911"/><rect x="680" y="892" width="10" height="1" fill="#C45911"/><rect x="698" y="892" width="10" height="1" fill="#C45911"/><rect x="626" y="905" width="10" height="1" fill="#C45911"/><rect x="644" y="905" width="10" height="1" fill="#C45911"/><rect x="662" y="905" width="10" height="1" fill="#C45911"/><rect x="680" y="905" width="10" height="1" fill="#C45911"/><rect x="698" y="905" width="10" height="1" fill="#C45911"/><rect x="730" y="859" width="91" height="13" fill="#EDEDED"/><rect x="730" y="885" width="91" height="13" fill="#EDEDED"/><rect x="730" y="846" width="91" height="1" fill="#C9C9C9"/><rect x="730" y="859" width="91" height="1" fill="#C9C9C9"/><rect x="730" y="872" width="91" height="1" fill="#C9C9C9"/><rect x="730" y="885" width="91" height="1" fill="#C9C9C9"/><rect x="730" y="898" width="91" height="1" fill="#C9C9C9"/><rect x="730" y="911" width="91" height="1" fill="#C9C9C9"/><rect x="730" y="846" width="1" height="66" fill="#C9C9C9"/><rect x="748" y="846" width="1" height="66" fill="#C9C9C9"/><rect x="766" y="846" width="1" height="66" fill="#C9C9C9"/><rect x="784" y="846" width="1" height="66" fill="#C9C9C9"/><rect x="802" y="846" width="1" height="66" fill="#C9C9C9"/><rect x="820" y="846" width="1" height="66" fill="#C9C9C9"/><rect x="730" y="859" width="91" height="2" fill="#C9C9C9"/><rect x="734" y="853" width="10" height="1" fill="#7B7B7B"/><rect x="752" y="853" width="10" height="1" fill="#7B7B7B"/><rect x="770" y="853" width="10" height="1" fill="#7B7B7B"/><rect x="788" y="853" width="10" height="1" fill="#7B7B7B"/><rect x="806" y="853" width="10" height="1" fill="#7B7B7B"/><rect x="734" y="866" width="10" height="1" fill="#7B7B7B"/><rect x="752" y="866" width="10" height="1" fill="#7B7B7B"/><rect x="770" y="866" width="10" height="1" fill="#7B7B7B"/><rect x="788" y="866" width="10" height="1" fill="#7B7B7B"/><rect x="806" y="866" width="10" height="1" fill="#7B7B7B"/><rect x="734" y="879" width="10" height="1" fill="#7B7B7B"/><rect x="752" y="879" width="10" height="1" fill="#7B7B7B"/><rect x="770" y="879" width="10" height="1" fill="#7B7B7B"/><rect x="788" y="879" width="10" height="1" fill="#7B7B7B"/><rect x="806" y="879" width="10" height="1" fill="#7B7B7B"/><rect x="734" y="892" width="10" height="1" fill="#7B7B7B"/><rect x="752" y="892" width="10" height="1" fill="#7B7B7B"/><rect x="770" y="892" width="10" height="1" fill="#7B7B7B"/><rect x="788" y="892" width="10" height="1" fill="#7B7B7B"/><rect x="806" y="892" width="10" height="1" fill="#7B7B7B"/><rect x="734" y="905" width="10" height="1" fill="#7B7B7B"/><rect x="752" y="905" width="10" height="1" fill="#7B7B7B"/><rect x="770" y="905" width="10" height="1" fill="#7B7B7B"/><rect x="788" y="905" width="10" height="1" fill="#7B7B7B"/><rect x="806" y="905" width="10" height="1" fill="#7B7B7B"/><rect x="838" y="859" width="91" height="13" fill="#FFF2CC"/><rect x="838" y="885" width="91" height="13" fill="#FFF2CC"/><rect x="838" y="846" width="91" height="1" fill="#FFD966"/><rect x="838" y="859" width="91" height="1" fill="#FFD966"/><rect x="838" y="872" width="91" height="1" fill="#FFD966"/><rect x="838" y="885" width="91" height="1" fill="#FFD966"/><rect x="838" y="898" width="91" height="1" fill="#FFD966"/><rect x="838" y="911" width="91" height="1" fill="#FFD966"/><rect x="838" y="846" width="1" height="66" fill="#FFD966"/><rect x="856" y="846" width="1" height="66" fill="#FFD966"/><rect x="874" y="846" width="1" height="66" fill="#FFD966"/><rect x="892" y="846" width="1" height="66" fill="#FFD966"/><rect x="910" y="846" width="1" height="66" fill="#FFD966"/><rect x="928" y="846" width="1" height="66" fill="#FFD966"/><rect x="838" y="859" width="91" height="2" fill="#FFD966"/><rect x="842" y="853" width="10" height="1" fill="#BF8F00"/><rect x="860" y="853" width="10" height="1" fill="#BF8F00"/><rect x="878" y="853" width="10" height="1" fill="#BF8F00"/><rect x="896" y="853" width="10" height="1" fill="#BF8F00"/><rect x="914" y="853" width="10" height="1" fill="#BF8F00"/><rect x="842" y="866" width="10" height="1" fill="#BF8F00"/><rect x="860" y="866" width="10" height="1" fill="#BF8F00"/><rect x="878" y="866" width="10" height="1" fill="#BF8F00"/><rect x="896" y="866" width="10" height="1" fill="#BF8F00"/><rect x="914" y="866" width="10" height="1" fill="#BF8F00"/><rect x="842" y="879" width="10" height="1" fill="#BF8F00"/><rect x="860" y="879" width="10" height="1" fill="#BF8F00"/><rect x="878" y="879" width="10" height="1" fill="#BF8F00"/><rect x="896" y="879" width="10" height="1" fill="#BF8F00"/><rect x="914" y="879" width="10" height="1" fill="#BF8F00"/><rect x="842" y="892" width="10" height="1" fill="#BF8F00"/><rect x="860" y="892" width="10" height="1" fill="#BF8F00"/><rect x="878" y="892" width="10" height="1" fill="#BF8F00"/><rect x="896" y="892" width="10" height="1" fill="#BF8F00"/><rect x="914" y="892" width="10" height="1" fill="#BF8F00"/><rect x="842" y="905" width="10" height="1" fill="#BF8F00"/><rect x="860" y="905" width="10" height="1" fill="#BF8F00"/><rect x="878" y="905" width="10" height="1" fill="#BF8F00"/><rect x="896" y="905" width="10" height="1" fill="#BF8F00"/><rect x="914" y="905" width="10" height="1" fill="#BF8F00"/><rect x="946" y="859" width="91" height="13" fill="#DEEAF6"/><rect x="946" y="885" width="91" height="13" fill="#DEEAF6"/><rect x="946" y="846" width="91" height="1" fill="#9CC2E5"/><rect x="946" y="859" width="91" height="1" fill="#9CC2E5"/><rect x="946" y="872" width="91" height="1" fill="#9CC2E5"/><rect x="946" y="885" width="91" height="1" fill="#9CC2E5"/><rect x="946" y="898" width="91" height="1" fill="#9CC2E5"/><rect x="946" y="911" width="91" height="1" fill="#9CC2E5"/><rect x="946" y="846" width="1" height="66" fill="#9CC2E5"/><rect x="964" y="846" width="1" height="66" fill="#9CC2E5"/><rect x="982" y="846" width="1" height="66" fill="#9CC2E5"/><rect x="1000" y="846" width="1" height="66" fill="#9CC2E5"/><rect x="1018" y="846" width="1" height="66" fill="#9CC2E5"/><rect x="1036" y="846" width="1" height="66" fill="#9CC2E5"/><rect x="946" y="859" width="91" height="2" fill="#9CC2E5"/><rect x="950" y="853" width="10" height="1" fill="#2E74B5"/><rect x="968" y="853" width="10" height="1" fill="#2E74B5"/><rect x="986" y="853" width="10" height="1" fill="#2E74B5"/><rect x="1004" y="853" width="10" height="1" fill="#2E74B5"/><rect x="1022" y="853" width="10" height="1" fill="#2E74B5"/><rect x="950" y="866" width="10" height="1" fill="#2E74B5"/><rect x="968" y="866" width="10" height="1" fill="#2E74B5"/><rect x="986" y="866" width="10" height="1" fill="#2E74B5"/><rect x="1004" y="866" width="10" height="1" fill="#2E74B5"/><rect x="1022" y="866" width="10" height="1" fill="#2E74B5"/><rect x="950" y="879" width="10" height="1" fill="#2E74B5"/><rect x="968" y="879" width="10" height="1" fill="#2E74B5"/><rect x="986" y="879" width="10" height="1" fill="#2E74B5"/><rect x="1004" y="879" width="10" height="1" fill="#2E74B5"/><rect x="1022" y="879" width="10" height="1" fill="#2E74B5"/><rect x="950" y="892" width="10" height="1" fill="#2E74B5"/><rect x="968" y="892" width="10" height="1" fill="#2E74B5"/><rect x="986" y="892" width="10" height="1" fill="#2E74B5"/><rect x="1004" y="892" width="10" height="1" fill="#2E74B5"/><rect x="1022" y="892" width="10" height="1" fill="#2E74B5"/><rect x="950" y="905" width="10" height="1" fill="#2E74B5"/><rect x="968" y="905" width="10" height="1" fill="#2E74B5"/><rect x="986" y="905" width="10" height="1" fill="#2E74B5"/><rect x="1004" y="905" width="10" height="1" fill="#2E74B5"/><rect x="1022" y="905" width="10" height="1" fill="#2E74B5"/><rect x="1054" y="859" width="91" height="13" fill="#E2EFD9"/><rect x="1054" y="885" width="91" height="13" fill="#E2EFD9"/><rect x="1054" y="846" width="91" height="1" fill="#A8D08D"/><rect x="1054" y="859" width="91" height="1" fill="#A8D08D"/><rect x="1054" y="872" width="91" height="1" fill="#A8D08D"/><rect x="1054" y="885" width="91" height="1" fill="#A8D08D"/><rect x="1054" y="898" width="91" height="1" fill="#A8D08D"/><rect x="1054" y="911" width="91" height="1" fill="#A8D08D"/><rect x="1054" y="846" width="1" height="66" fill="#A8D08D"/><rect x="1072" y="846" width="1" height="66" fill="#A8D08D"/><rect x="1090" y="846" width="1" height="66" fill="#A8D08D"/><rect x="1108" y="846" width="1" height="66" fill="#A8D08D"/><rect x="1126" y="846" width="1" height="66" fill="#A8D08D"/><rect x="1144" y="846" width="1" height="66" fill="#A8D08D"/><rect x="1054" y="859" width="91" height="2" fill="#A8D08D"/><rect x="1058" y="853" width="10" height="1" fill="#538135"/><rect x="1076" y="853" width="10" height="1" fill="#538135"/><rect x="1094" y="853" width="10" height="1" fill="#538135"/><rect x="1112" y="853" width="10" height="1" fill="#538135"/><rect x="1130" y="853" width="10" height="1" fill="#538135"/><rect x="1058" y="866" width="10" height="1" fill="#538135"/><rect x="1076" y="866" width="10" height="1" fill="#538135"/><rect x="1094" y="866" width="10" height="1" fill="#538135"/><rect x="1112" y="866" width="10" height="1" fill="#538135"/><rect x="1130" y="866" width="10" height="1" fill="#538135"/><rect x="1058" y="879" width="10" height="1" fill="#538135"/><rect x="1076" y="879" width="10" height="1" fill="#538135"/><rect x="1094" y="879" width="10" height="1" fill="#538135"/><rect x="1112" y="879" width="10" height="1" fill="#538135"/><rect x="1130" y="879" width="10" height="1" fill="#538135"/><rect x="1058" y="892" width="10" height="1" fill="#538135"/><rect x="1076" y="892" width="10" height="1" fill="#538135"/><rect x="1094" y="892" width="10" height="1" fill="#538135"/><rect x="1112" y="892" width="10" height="1" fill="#538135"/><rect x="1130" y="892" width="10" height="1" fill="#538135"/><rect x="1058" y="905" width="10" height="1" fill="#538135"/><rect x="1076" y="905" width="10" height="1" fill="#538135"/><rect x="1094" y="905" width="10" height="1" fill="#538135"/><rect x="1112" y="905" width="10" height="1" fill="#538135"/><rect x="1130" y="905" width="10" height="1" fill="#538135"/><rect x="424" y="943" width="73" height="13" fill="#CCCCCC"/><rect x="424" y="969" width="73" height="13" fill="#CCCCCC"/><rect x="406" y="943" width="91" height="1" fill="#666666"/><rect x="424" y="956" width="73" height="1" fill="#666666"/><rect x="424" y="969" width="73" height="1" fill="#666666"/><rect x="424" y="982" width="73" height="1" fill="#666666"/><rect x="424" y="995" width="73" height="1" fill="#666666"/><rect x="424" y="943" width="1" height="53" fill="#666666"/><rect x="442" y="943" width="1" height="53" fill="#666666"/><rect x="460" y="943" width="1" height="53" fill="#666666"/><rect x="478" y="943" width="1" height="53" fill="#666666"/><rect x="496" y="943" width="1" height="53" fill="#666666"/><rect x="410" y="937" width="10" height="1" fill="#000000"/><rect x="428" y="937" width="10" height="1" fill="#000000"/><rect x="446" y="937" width="10" height="1" fill="#000000"/><rect x="464" y="937" width="10" height="1" fill="#000000"/><rect x="482" y="937" width="10" height="1" fill="#000000"/><rect x="410" y="950" width="10" height="1" fill="#000000"/><rect x="428" y="950" width="10" height="1" fill="#000000"/><rect x="446" y="950" width="10" height="1" fill="#000000"/><rect x="464" y="950" width="10" height="1" fill="#000000"/><rect x="482" y="950" width="10" height="1" fill="#000000"/><rect x="410" y="963" width="10" height="1" fill="#000000"/><rect x="428" y="963" width="10" height="1" fill="#000000"/><rect x="446" y="963" width="10" height="1" fill="#000000"/><rect x="464" y="963" width="10" height="1" fill="#000000"/><rect x="482" y="963" width="10" height="1" fill="#000000"/><rect x="410" y="976" width="10" height="1" fill="#000000"/><rect x="428" y="976" width="10" height="1" fill="#000000"/><rect x="446" y="976" width="10" height="1" fill="#000000"/><rect x="464" y="976" width="10" height="1" fill="#000000"/><rect x="482" y="976" width="10" height="1" fill="#000000"/><rect x="410" y="989" width="10" height="1" fill="#000000"/><rect x="428" y="989" width="10" height="1" fill="#000000"/><rect x="446" y="989" width="10" height="1" fill="#000000"/><rect x="464" y="989" width="10" height="1" fill="#000000"/><rect x="482" y="989" width="10" height="1" fill="#000000"/><rect x="532" y="943" width="73" height="13" fill="#D9E2F3"/><rect x="532" y="969" width="73" height="13" fill="#D9E2F3"/><rect x="514" y="943" width="91" height="1" fill="#8EAADB"/><rect x="532" y="956" width="73" height="1" fill="#8EAADB"/><rect x="532" y="969" width="73" height="1" fill="#8EAADB"/><rect x="532" y="982" width="73" height="1" fill="#8EAADB"/><rect x="532" y="995" width="73" height="1" fill="#8EAADB"/><rect x="532" y="943" width="1" height="53" fill="#8EAADB"/><rect x="550" y="943" width="1" height="53" fill="#8EAADB"/><rect x="568" y="943" width="1" height="53" fill="#8EAADB"/><rect x="586" y="943" width="1" height="53" fill="#8EAADB"/><rect x="604" y="943" width="1" height="53" fill="#8EAADB"/><rect x="518" y="937" width="10" height="1" fill="#2F5496"/><rect x="536" y="937" width="10" height="1" fill="#2F5496"/><rect x="554" y="937" width="10" height="1" fill="#2F5496"/><rect x="572" y="937" width="10" height="1" fill="#2F5496"/><rect x="590" y="937" width="10" height="1" fill="#2F5496"/><rect x="518" y="950" width="10" height="1" fill="#2F5496"/><rect x="536" y="950" width="10" height="1" fill="#2F5496"/><rect x="554" y="950" width="10" height="1" fill="#2F5496"/><rect x="572" y="950" width="10" height="1" fill="#2F5496"/><rect x="590" y="950" width="10" height="1" fill="#2F5496"/><rect x="518" y="963" width="10" height="1" fill="#2F5496"/><rect x="536" y="963" width="10" height="1" fill="#2F5496"/><rect x="554" y="963" width="10" height="1" fill="#2F5496"/><rect x="572" y="963" width="10" height="1" fill="#2F5496"/><rect x="590" y="963" width="10" height="1" fill="#2F5496"/><rect x="518" y="976" width="10" height="1" fill="#2F5496"/><rect x="536" y="976" width="10" height="1" fill="#2F5496"/><rect x="554" y="976" width="10" height="1" fill="#2F5496"/><rect x="572" y="976" width="10" height="1" fill="#2F5496"/><rect x="590" y="976" width="10" height="1" fill="#2F5496"/><rect x="518" y="989" width="10" height="1" fill="#2F5496"/><rect x="536" y="989" width="10" height="1" fill="#2F5496"/><rect x="554" y="989" width="10" height="1" fill="#2F5496"/><rect x="572" y="989" width="10" height="1" fill="#2F5496"/><rect x="590" y="989" width="10" height="1" fill="#2F5496"/><rect x="640" y="943" width="73" height="13" fill="#FBE4D5"/><rect x="640" y="969" width="73" height="13" fill="#FBE4D5"/><rect x="622" y="943" width="91" height="1" fill="#F4B083"/><rect x="640" y="956" width="73" height="1" fill="#F4B083"/><rect x="640" y="969" width="73" height="1" fill="#F4B083"/><rect x="640" y="982" width="73" height="1" fill="#F4B083"/><rect x="640" y="995" width="73" height="1" fill="#F4B083"/><rect x="640" y="943" width="1" height="53" fill="#F4B083"/><rect x="658" y="943" width="1" height="53" fill="#F4B083"/><rect x="676" y="943" width="1" height="53" fill="#F4B083"/><rect x="694" y="943" width="1" height="53" fill="#F4B083"/><rect x="712" y="943" width="1" height="53" fill="#F4B083"/><rect x="626" y="937" width="10" height="1" fill="#C45911"/><rect x="644" y="937" width="10" height="1" fill="#C45911"/><rect x="662" y="937" width="10" height="1" fill="#C45911"/><rect x="680" y="937" width="10" height="1" fill="#C45911"/><rect x="698" y="937" width="10" height="1" fill="#C45911"/><rect x="626" y="950" width="10" height="1" fill="#C45911"/><rect x="644" y="950" width="10" height="1" fill="#C45911"/><rect x="662" y="950" width="10" height="1" fill="#C45911"/><rect x="680" y="950" width="10" height="1" fill="#C45911"/><rect x="698" y="950" width="10" height="1" fill="#C45911"/><rect x="626" y="963" width="10" height="1" fill="#C45911"/><rect x="644" y="963" width="10" height="1" fill="#C45911"/><rect x="662" y="963" width="10" height="1" fill="#C45911"/><rect x="680" y="963" width="10" height="1" fill="#C45911"/><rect x="698" y="963" width="10" height="1" fill="#C45911"/><rect x="626" y="976" width="10" height="1" fill="#C45911"/><rect x="644" y="976" width="10" height="1" fill="#C45911"/><rect x="662" y="976" width="10" height="1" fill="#C45911"/><rect x="680" y="976" width="10" height="1" fill="#C45911"/><rect x="698" y="976" width="10" height="1" fill="#C45911"/><rect x="626" y="989" width="10" height="1" fill="#C45911"/><rect x="644" y="989" width="10" height="1" fill="#C45911"/><rect x="662" y="989" width="10" height="1" fill="#C45911"/><rect x="680" y="989" width="10" height="1" fill="#C45911"/><rect x="698" y="989" width="10" height="1" fill="#C45911"/><rect x="748" y="943" width="73" height="13" fill="#EDEDED"/><rect x="748" y="969" width="73" height="13" fill="#EDEDED"/><rect x="730" y="943" width="91" height="1" fill="#C9C9C9"/><rect x="748" y="956" width="73" height="1" fill="#C9C9C9"/><rect x="748" y="969" width="73" height="1" fill="#C9C9C9"/><rect x="748" y="982" width="73" height="1" fill="#C9C9C9"/><rect x="748" y="995" width="73" height="1" fill="#C9C9C9"/><rect x="748" y="943" width="1" height="53" fill="#C9C9C9"/><rect x="766" y="943" width="1" height="53" fill="#C9C9C9"/><rect x="784" y="943" width="1" height="53" fill="#C9C9C9"/><rect x="802" y="943" width="1" height="53" fill="#C9C9C9"/><rect x="820" y="943" width="1" height="53" fill="#C9C9C9"/><rect x="734" y="937" width="10" height="1" fill="#7B7B7B"/><rect x="752" y="937" width="10" height="1" fill="#7B7B7B"/><rect x="770" y="937" width="10" height="1" fill="#7B7B7B"/><rect x="788" y="937" width="10" height="1" fill="#7B7B7B"/><rect x="806" y="937" width="10" height="1" fill="#7B7B7B"/><rect x="734" y="950" width="10" height="1" fill="#7B7B7B"/><rect x="752" y="950" width="10" height="1" fill="#7B7B7B"/><rect x="770" y="950" width="10" height="1" fill="#7B7B7B"/><rect x="788" y="950" width="10" height="1" fill="#7B7B7B"/><rect x="806" y="950" width="10" height="1" fill="#7B7B7B"/><rect x="734" y="963" width="10" height="1" fill="#7B7B7B"/><rect x="752" y="963" width="10" height="1" fill="#7B7B7B"/><rect x="770" y="963" width="10" height="1" fill="#7B7B7B"/><rect x="788" y="963" width="10" height="1" fill="#7B7B7B"/><rect x="806" y="963" width="10" height="1" fill="#7B7B7B"/><rect x="734" y="976" width="10" height="1" fill="#7B7B7B"/><rect x="752" y="976" width="10" height="1" fill="#7B7B7B"/><rect x="770" y="976" width="10" height="1" fill="#7B7B7B"/><rect x="788" y="976" width="10" height="1" fill="#7B7B7B"/><rect x="806" y="976" width="10" height="1" fill="#7B7B7B"/><rect x="734" y="989" width="10" height="1" fill="#7B7B7B"/><rect x="752" y="989" width="10" height="1" fill="#7B7B7B"/><rect x="770" y="989" width="10" height="1" fill="#7B7B7B"/><rect x="788" y="989" width="10" height="1" fill="#7B7B7B"/><rect x="806" y="989" width="10" height="1" fill="#7B7B7B"/><rect x="856" y="943" width="73" height="13" fill="#FFF2CC"/><rect x="856" y="969" width="73" height="13" fill="#FFF2CC"/><rect x="838" y="943" width="91" height="1" fill="#FFD966"/><rect x="856" y="956" width="73" height="1" fill="#FFD966"/><rect x="856" y="969" width="73" height="1" fill="#FFD966"/><rect x="856" y="982" width="73" height="1" fill="#FFD966"/><rect x="856" y="995" width="73" height="1" fill="#FFD966"/><rect x="856" y="943" width="1" height="53" fill="#FFD966"/><rect x="874" y="943" width="1" height="53" fill="#FFD966"/><rect x="892" y="943" width="1" height="53" fill="#FFD966"/><rect x="910" y="943" width="1" height="53" fill="#FFD966"/><rect x="928" y="943" width="1" height="53" fill="#FFD966"/><rect x="842" y="937" width="10" height="1" fill="#BF8F00"/><rect x="860" y="937" width="10" height="1" fill="#BF8F00"/><rect x="878" y="937" width="10" height="1" fill="#BF8F00"/><rect x="896" y="937" width="10" height="1" fill="#BF8F00"/><rect x="914" y="937" width="10" height="1" fill="#BF8F00"/><rect x="842" y="950" width="10" height="1" fill="#BF8F00"/><rect x="860" y="950" width="10" height="1" fill="#BF8F00"/><rect x="878" y="950" width="10" height="1" fill="#BF8F00"/><rect x="896" y="950" width="10" height="1" fill="#BF8F00"/><rect x="914" y="950" width="10" height="1" fill="#BF8F00"/><rect x="842" y="963" width="10" height="1" fill="#BF8F00"/><rect x="860" y="963" width="10" height="1" fill="#BF8F00"/><rect x="878" y="963" width="10" height="1" fill="#BF8F00"/><rect x="896" y="963" width="10" height="1" fill="#BF8F00"/><rect x="914" y="963" width="10" height="1" fill="#BF8F00"/><rect x="842" y="976" width="10" height="1" fill="#BF8F00"/><rect x="860" y="976" width="10" height="1" fill="#BF8F00"/><rect x="878" y="976" width="10" height="1" fill="#BF8F00"/><rect x="896" y="976" width="10" height="1" fill="#BF8F00"/><rect x="914" y="976" width="10" height="1" fill="#BF8F00"/><rect x="842" y="989" width="10" height="1" fill="#BF8F00"/><rect x="860" y="989" width="10" height="1" fill="#BF8F00"/><rect x="878" y="989" width="10" height="1" fill="#BF8F00"/><rect x="896" y="989" width="10" height="1" fill="#BF8F00"/><rect x="914" y="989" width="10" height="1" fill="#BF8F00"/><rect x="964" y="943" width="73" height="13" fill="#DEEAF6"/><rect x="964" y="969" width="73" height="13" fill="#DEEAF6"/><rect x="946" y="943" width="91" height="1" fill="#9CC2E5"/><rect x="964" y="956" width="73" height="1" fill="#9CC2E5"/><rect x="964" y="969" width="73" height="1" fill="#9CC2E5"/><rect x="964" y="982" width="73" height="1" fill="#9CC2E5"/><rect x="964" y="995" width="73" height="1" fill="#9CC2E5"/><rect x="964" y="943" width="1" height="53" fill="#9CC2E5"/><rect x="982" y="943" width="1" height="53" fill="#9CC2E5"/><rect x="1000" y="943" width="1" height="53" fill="#9CC2E5"/><rect x="1018" y="943" width="1" height="53" fill="#9CC2E5"/><rect x="1036" y="943" width="1" height="53" fill="#9CC2E5"/><rect x="950" y="937" width="10" height="1" fill="#2E74B5"/><rect x="968" y="937" width="10" height="1" fill="#2E74B5"/><rect x="986" y="937" width="10" height="1" fill="#2E74B5"/><rect x="1004" y="937" width="10" height="1" fill="#2E74B5"/><rect x="1022" y="937" width="10" height="1" fill="#2E74B5"/><rect x="950" y="950" width="10" height="1" fill="#2E74B5"/><rect x="968" y="950" width="10" height="1" fill="#2E74B5"/><rect x="986" y="950" width="10" height="1" fill="#2E74B5"/><rect x="1004" y="950" width="10" height="1" fill="#2E74B5"/><rect x="1022" y="950" width="10" height="1" fill="#2E74B5"/><rect x="950" y="963" width="10" height="1" fill="#2E74B5"/><rect x="968" y="963" width="10" height="1" fill="#2E74B5"/><rect x="986" y="963" width="10" height="1" fill="#2E74B5"/><rect x="1004" y="963" width="10" height="1" fill="#2E74B5"/><rect x="1022" y="963" width="10" height="1" fill="#2E74B5"/><rect x="950" y="976" width="10" height="1" fill="#2E74B5"/><rect x="968" y="976" width="10" height="1" fill="#2E74B5"/><rect x="986" y="976" width="10" height="1" fill="#2E74B5"/><rect x="1004" y="976" width="10" height="1" fill="#2E74B5"/><rect x="1022" y="976" width="10" height="1" fill="#2E74B5"/><rect x="950" y="989" width="10" height="1" fill="#2E74B5"/><rect x="968" y="989" width="10" height="1" fill="#2E74B5"/><rect x="986" y="989" width="10" height="1" fill="#2E74B5"/><rect x="1004" y="989" width="10" height="1" fill="#2E74B5"/><rect x="1022" y="989" width="10" height="1" fill="#2E74B5"/><rect x="1072" y="943" width="73" height="13" fill="#E2EFD9"/><rect x="1072" y="969" width="73" height="13" fill="#E2EFD9"/><rect x="1054" y="943" width="91" height="1" fill="#A8D08D"/><rect x="1072" y="956" width="73" height="1" fill="#A8D08D"/><rect x="1072" y="969" width="73" height="1" fill="#A8D08D"/><rect x="1072" y="982" width="73" height="1" fill="#A8D08D"/><rect x="1072" y="995" width="73" height="1" fill="#A8D08D"/><rect x="1072" y="943" width="1" height="53" fill="#A8D08D"/><rect x="1090" y="943" width="1" height="53" fill="#A8D08D"/><rect x="1108" y="943" width="1" height="53" fill="#A8D08D"/><rect x="1126" y="943" width="1" height="53" fill="#A8D08D"/><rect x="1144" y="943" width="1" height="53" fill="#A8D08D"/><rect x="1058" y="937" width="10" height="1" fill="#538135"/><rect x="1076" y="937" width="10" height="1" fill="#538135"/><rect x="1094" y="937" width="10" height="1" fill="#538135"/><rect x="1112" y="937" width="10" height="1" fill="#538135"/><rect x="1130" y="937" width="10" height="1" fill="#538135"/><rect x="1058" y="950" width="10" height="1" fill="#538135"/><rect x="1076" y="950" width="10" height="1" fill="#538135"/><rect x="1094" y="950" width="10" height="1" fill="#538135"/><rect x="1112" y="950" width="10" height="1" fill="#538135"/><rect x="1130" y="950" width="10" height="1" fill="#538135"/><rect x="1058" y="963" width="10" height="1" fill="#538135"/><rect x="1076" y="963" width="10" height="1" fill="#538135"/><rect x="1094" y="963" width="10" height="1" fill="#538135"/><rect x="1112" y="963" width="10" height="1" fill="#538135"/><rect x="1130" y="963" width="10" height="1" fill="#538135"/><rect x="1058" y="976" width="10" height="1" fill="#538135"/><rect x="1076" y="976" width="10" height="1" fill="#538135"/><rect x="1094" y="976" width="10" height="1" fill="#538135"/><rect x="1112" y="976" width="10" height="1" fill="#538135"/><rect x="1130" y="976" width="10" height="1" fill="#538135"/><rect x="1058" y="989" width="10" height="1" fill="#538135"/><rect x="1076" y="989" width="10" height="1" fill="#538135"/><rect x="1094" y="989" width="10" height="1" fill="#538135"/><rect x="1112" y="989" width="10" height="1" fill="#538135"/><rect x="1130" y="989" width="10" height="1" fill="#538135"/><rect x="397" y="1018" width="756" height="1" fill="#e1dfdd"/><rect x="406" y="1080" width="90" height="13" fill="#CCCCCC"/><rect x="406" y="1106" width="90" height="13" fill="#CCCCCC"/><rect x="406" y="1080" width="90" height="1" fill="#666666"/><rect x="410" y="1074" width="10" height="1" fill="#000"/><rect x="428" y="1074" width="10" height="1" fill="#000"/><rect x="446" y="1074" width="10" height="1" fill="#000"/><rect x="464" y="1074" width="10" height="1" fill="#000"/><rect x="482" y="1074" width="10" height="1" fill="#000"/><rect x="410" y="1087" width="10" height="1" fill="#000"/><rect x="428" y="1087" width="10" height="1" fill="#000"/><rect x="446" y="1087" width="10" height="1" fill="#000"/><rect x="464" y="1087" width="10" height="1" fill="#000"/><rect x="482" y="1087" width="10" height="1" fill="#000"/><rect x="410" y="1100" width="10" height="1" fill="#000"/><rect x="428" y="1100" width="10" height="1" fill="#000"/><rect x="446" y="1100" width="10" height="1" fill="#000"/><rect x="464" y="1100" width="10" height="1" fill="#000"/><rect x="482" y="1100" width="10" height="1" fill="#000"/><rect x="410" y="1113" width="10" height="1" fill="#000"/><rect x="428" y="1113" width="10" height="1" fill="#000"/><rect x="446" y="1113" width="10" height="1" fill="#000"/><rect x="464" y="1113" width="10" height="1" fill="#000"/><rect x="482" y="1113" width="10" height="1" fill="#000"/><rect x="410" y="1126" width="10" height="1" fill="#000"/><rect x="428" y="1126" width="10" height="1" fill="#000"/><rect x="446" y="1126" width="10" height="1" fill="#000"/><rect x="464" y="1126" width="10" height="1" fill="#000"/><rect x="482" y="1126" width="10" height="1" fill="#000"/><rect x="406" y="1151" width="90" height="1" fill="#666666"/><rect x="514" y="1080" width="90" height="13" fill="#D9E2F3"/><rect x="514" y="1106" width="90" height="13" fill="#D9E2F3"/><rect x="514" y="1080" width="90" height="1" fill="#8EAADB"/><rect x="518" y="1074" width="10" height="1" fill="#000"/><rect x="536" y="1074" width="10" height="1" fill="#000"/><rect x="554" y="1074" width="10" height="1" fill="#000"/><rect x="572" y="1074" width="10" height="1" fill="#000"/><rect x="590" y="1074" width="10" height="1" fill="#000"/><rect x="518" y="1087" width="10" height="1" fill="#000"/><rect x="536" y="1087" width="10" height="1" fill="#000"/><rect x="554" y="1087" width="10" height="1" fill="#000"/><rect x="572" y="1087" width="10" height="1" fill="#000"/><rect x="590" y="1087" width="10" height="1" fill="#000"/><rect x="518" y="1100" width="10" height="1" fill="#000"/><rect x="536" y="1100" width="10" height="1" fill="#000"/><rect x="554" y="1100" width="10" height="1" fill="#000"/><rect x="572" y="1100" width="10" height="1" fill="#000"/><rect x="590" y="1100" width="10" height="1" fill="#000"/><rect x="518" y="1113" width="10" height="1" fill="#000"/><rect x="536" y="1113" width="10" height="1" fill="#000"/><rect x="554" y="1113" width="10" height="1" fill="#000"/><rect x="572" y="1113" width="10" height="1" fill="#000"/><rect x="590" y="1113" width="10" height="1" fill="#000"/><rect x="518" y="1126" width="10" height="1" fill="#000"/><rect x="536" y="1126" width="10" height="1" fill="#000"/><rect x="554" y="1126" width="10" height="1" fill="#000"/><rect x="572" y="1126" width="10" height="1" fill="#000"/><rect x="590" y="1126" width="10" height="1" fill="#000"/><rect x="514" y="1151" width="90" height="1" fill="#8EAADB"/><rect x="622" y="1080" width="90" height="13" fill="#FBE4D5"/><rect x="622" y="1106" width="90" height="13" fill="#FBE4D5"/><rect x="622" y="1080" width="90" height="1" fill="#F4B083"/><rect x="626" y="1074" width="10" height="1" fill="#000"/><rect x="644" y="1074" width="10" height="1" fill="#000"/><rect x="662" y="1074" width="10" height="1" fill="#000"/><rect x="680" y="1074" width="10" height="1" fill="#000"/><rect x="698" y="1074" width="10" height="1" fill="#000"/><rect x="626" y="1087" width="10" height="1" fill="#000"/><rect x="644" y="1087" width="10" height="1" fill="#000"/><rect x="662" y="1087" width="10" height="1" fill="#000"/><rect x="680" y="1087" width="10" height="1" fill="#000"/><rect x="698" y="1087" width="10" height="1" fill="#000"/><rect x="626" y="1100" width="10" height="1" fill="#000"/><rect x="644" y="1100" width="10" height="1" fill="#000"/><rect x="662" y="1100" width="10" height="1" fill="#000"/><rect x="680" y="1100" width="10" height="1" fill="#000"/><rect x="698" y="1100" width="10" height="1" fill="#000"/><rect x="626" y="1113" width="10" height="1" fill="#000"/><rect x="644" y="1113" width="10" height="1" fill="#000"/><rect x="662" y="1113" width="10" height="1" fill="#000"/><rect x="680" y="1113" width="10" height="1" fill="#000"/><rect x="698" y="1113" width="10" height="1" fill="#000"/><rect x="626" y="1126" width="10" height="1" fill="#000"/><rect x="644" y="1126" width="10" height="1" fill="#000"/><rect x="662" y="1126" width="10" height="1" fill="#000"/><rect x="680" y="1126" width="10" height="1" fill="#000"/><rect x="698" y="1126" width="10" height="1" fill="#000"/><rect x="622" y="1151" width="90" height="1" fill="#F4B083"/><rect x="730" y="1080" width="90" height="13" fill="#EDEDED"/><rect x="730" y="1106" width="90" height="13" fill="#EDEDED"/><rect x="730" y="1080" width="90" height="1" fill="#C9C9C9"/><rect x="734" y="1074" width="10" height="1" fill="#000"/><rect x="752" y="1074" width="10" height="1" fill="#000"/><rect x="770" y="1074" width="10" height="1" fill="#000"/><rect x="788" y="1074" width="10" height="1" fill="#000"/><rect x="806" y="1074" width="10" height="1" fill="#000"/><rect x="734" y="1087" width="10" height="1" fill="#000"/><rect x="752" y="1087" width="10" height="1" fill="#000"/><rect x="770" y="1087" width="10" height="1" fill="#000"/><rect x="788" y="1087" width="10" height="1" fill="#000"/><rect x="806" y="1087" width="10" height="1" fill="#000"/><rect x="734" y="1100" width="10" height="1" fill="#000"/><rect x="752" y="1100" width="10" height="1" fill="#000"/><rect x="770" y="1100" width="10" height="1" fill="#000"/><rect x="788" y="1100" width="10" height="1" fill="#000"/><rect x="806" y="1100" width="10" height="1" fill="#000"/><rect x="734" y="1113" width="10" height="1" fill="#000"/><rect x="752" y="1113" width="10" height="1" fill="#000"/><rect x="770" y="1113" width="10" height="1" fill="#000"/><rect x="788" y="1113" width="10" height="1" fill="#000"/><rect x="806" y="1113" width="10" height="1" fill="#000"/><rect x="734" y="1126" width="10" height="1" fill="#000"/><rect x="752" y="1126" width="10" height="1" fill="#000"/><rect x="770" y="1126" width="10" height="1" fill="#000"/><rect x="788" y="1126" width="10" height="1" fill="#000"/><rect x="806" y="1126" width="10" height="1" fill="#000"/><rect x="730" y="1151" width="90" height="1" fill="#C9C9C9"/><rect x="838" y="1080" width="90" height="13" fill="#FFF2CC"/><rect x="838" y="1106" width="90" height="13" fill="#FFF2CC"/><rect x="838" y="1080" width="90" height="1" fill="#FFD966"/><rect x="842" y="1074" width="10" height="1" fill="#000"/><rect x="860" y="1074" width="10" height="1" fill="#000"/><rect x="878" y="1074" width="10" height="1" fill="#000"/><rect x="896" y="1074" width="10" height="1" fill="#000"/><rect x="914" y="1074" width="10" height="1" fill="#000"/><rect x="842" y="1087" width="10" height="1" fill="#000"/><rect x="860" y="1087" width="10" height="1" fill="#000"/><rect x="878" y="1087" width="10" height="1" fill="#000"/><rect x="896" y="1087" width="10" height="1" fill="#000"/><rect x="914" y="1087" width="10" height="1" fill="#000"/><rect x="842" y="1100" width="10" height="1" fill="#000"/><rect x="860" y="1100" width="10" height="1" fill="#000"/><rect x="878" y="1100" width="10" height="1" fill="#000"/><rect x="896" y="1100" width="10" height="1" fill="#000"/><rect x="914" y="1100" width="10" height="1" fill="#000"/><rect x="842" y="1113" width="10" height="1" fill="#000"/><rect x="860" y="1113" width="10" height="1" fill="#000"/><rect x="878" y="1113" width="10" height="1" fill="#000"/><rect x="896" y="1113" width="10" height="1" fill="#000"/><rect x="914" y="1113" width="10" height="1" fill="#000"/><rect x="842" y="1126" width="10" height="1" fill="#000"/><rect x="860" y="1126" width="10" height="1" fill="#000"/><rect x="878" y="1126" width="10" height="1" fill="#000"/><rect x="896" y="1126" width="10" height="1" fill="#000"/><rect x="914" y="1126" width="10" height="1" fill="#000"/><rect x="838" y="1151" width="90" height="1" fill="#FFD966"/><rect x="946" y="1080" width="90" height="13" fill="#DEEAF6"/><rect x="946" y="1106" width="90" height="13" fill="#DEEAF6"/><rect x="946" y="1080" width="90" height="1" fill="#9CC2E5"/><rect x="950" y="1074" width="10" height="1" fill="#000"/><rect x="968" y="1074" width="10" height="1" fill="#000"/><rect x="986" y="1074" width="10" height="1" fill="#000"/><rect x="1004" y="1074" width="10" height="1" fill="#000"/><rect x="1022" y="1074" width="10" height="1" fill="#000"/><rect x="950" y="1087" width="10" height="1" fill="#000"/><rect x="968" y="1087" width="10" height="1" fill="#000"/><rect x="986" y="1087" width="10" height="1" fill="#000"/><rect x="1004" y="1087" width="10" height="1" fill="#000"/><rect x="1022" y="1087" width="10" height="1" fill="#000"/><rect x="950" y="1100" width="10" height="1" fill="#000"/><rect x="968" y="1100" width="10" height="1" fill="#000"/><rect x="986" y="1100" width="10" height="1" fill="#000"/><rect x="1004" y="1100" width="10" height="1" fill="#000"/><rect x="1022" y="1100" width="10" height="1" fill="#000"/><rect x="950" y="1113" width="10" height="1" fill="#000"/><rect x="968" y="1113" width="10" height="1" fill="#000"/><rect x="986" y="1113" width="10" height="1" fill="#000"/><rect x="1004" y="1113" width="10" height="1" fill="#000"/><rect x="1022" y="1113" width="10" height="1" fill="#000"/><rect x="950" y="1126" width="10" height="1" fill="#000"/><rect x="968" y="1126" width="10" height="1" fill="#000"/><rect x="986" y="1126" width="10" height="1" fill="#000"/><rect x="1004" y="1126" width="10" height="1" fill="#000"/><rect x="1022" y="1126" width="10" height="1" fill="#000"/><rect x="946" y="1151" width="90" height="1" fill="#9CC2E5"/><rect x="1054" y="1080" width="90" height="13" fill="#E2EFD9"/><rect x="1054" y="1106" width="90" height="13" fill="#E2EFD9"/><rect x="1054" y="1080" width="90" height="1" fill="#A8D08D"/><rect x="1058" y="1074" width="10" height="1" fill="#000"/><rect x="1076" y="1074" width="10" height="1" fill="#000"/><rect x="1094" y="1074" width="10" height="1" fill="#000"/><rect x="1112" y="1074" width="10" height="1" fill="#000"/><rect x="1130" y="1074" width="10" height="1" fill="#000"/><rect x="1058" y="1087" width="10" height="1" fill="#000"/><rect x="1076" y="1087" width="10" height="1" fill="#000"/><rect x="1094" y="1087" width="10" height="1" fill="#000"/><rect x="1112" y="1087" width="10" height="1" fill="#000"/><rect x="1130" y="1087" width="10" height="1" fill="#000"/><rect x="1058" y="1100" width="10" height="1" fill="#000"/><rect x="1076" y="1100" width="10" height="1" fill="#000"/><rect x="1094" y="1100" width="10" height="1" fill="#000"/><rect x="1112" y="1100" width="10" height="1" fill="#000"/><rect x="1130" y="1100" width="10" height="1" fill="#000"/><rect x="1058" y="1113" width="10" height="1" fill="#000"/><rect x="1076" y="1113" width="10" height="1" fill="#000"/><rect x="1094" y="1113" width="10" height="1" fill="#000"/><rect x="1112" y="1113" width="10" height="1" fill="#000"/><rect x="1130" y="1113" width="10" height="1" fill="#000"/><rect x="1058" y="1126" width="10" height="1" fill="#000"/><rect x="1076" y="1126" width="10" height="1" fill="#000"/><rect x="1094" y="1126" width="10" height="1" fill="#000"/><rect x="1112" y="1126" width="10" height="1" fill="#000"/><rect x="1130" y="1126" width="10" height="1" fill="#000"/><rect x="1054" y="1151" width="90" height="1" fill="#A8D08D"/></g></svg>
<svg width="1275" height="1293" style="left:0;top:0;shape-rendering:crispEdges">
<rect x="1153" y="804" width="25" height="324" fill="#e6e6e6"/>
<rect x="1153.5" y="106.5" width="24" height="25" fill="#fff" stroke="#acacac"/>
<rect x="1153.5" y="131.5" width="24" height="672" fill="#fff" stroke="#acacac"/>
<rect x="1153.5" y="1127.5" width="24" height="25" fill="#fff" stroke="#acacac"/>
<rect x="396" y="1155" width="784" height="1" fill="#e1dfdd"/>
</svg>
<svg width="1275" height="1293" style="left:0;top:0">
<path d="M1160 121 L1165.5 115 L1171 121 Z" fill="#737373"/>
<path d="M1160 1138 L1165.5 1144 L1171 1138 Z" fill="#737373"/>
<rect x="1172" y="1273" width="3" height="3" fill="#9a9a9a"/>
<rect x="1166" y="1279" width="3" height="3" fill="#9a9a9a"/>
<rect x="1172" y="1279" width="3" height="3" fill="#9a9a9a"/>
</svg>
<div class="t" style="left:444.00px;top:1169.00px;font-size:17.87px;color:#262626;">Upravit styl tabulky...</div>
<div class="t" style="left:444.00px;top:1207.00px;font-size:17.62px;color:#262626;">Vymazat</div>
<div class="t" style="left:444.00px;top:1244.00px;font-size:18.04px;color:#262626;">Nový styl tabulky...</div>
<div class="a" style="left:444px;top:1184px;width:12px;height:1px;background:#262626"></div>
<div class="a" style="left:444px;top:1222px;width:11px;height:1px;background:#262626"></div>
<div class="a" style="left:444px;top:1260px;width:12px;height:1px;background:#262626"></div>
<svg width="1275" height="1293" style="left:0;top:0">
<g fill="none" stroke="#333" stroke-width="1.3">
<!-- icon 1: edit -->
<path d="M425.5 1184.6 H410.6 V1164.8 H433.3 V1174"/>
<path d="M410.6 1171 H418 M410.6 1178.7 H418 M418 1164.8 V1171 M426 1164.8 V1171"/>
</g>
<path d="M418 1171 H428.5 L418.5 1183 Z" fill="#8cc0ec"/>
<path d="M418.6 1183 V1171.7 H428.5 M418.6 1178.7 H422.5" fill="none" stroke="#0062b8" stroke-width="1.4"/>
<path d="M427 1185 L433.3 1178.5 V1185 Z" fill="#8cc0ec" stroke="#0062b8" stroke-width="1.3"/>
<path d="M419.5 1186.5 L421 1181.5 L430.8 1172 C431.8 1171 433 1171.2 433.6 1172 C434.3 1172.8 434.3 1173.8 433.5 1174.6 L423.8 1184.5 Z" fill="#fff" stroke="#333" stroke-width="1.3"/>
<path d="M421 1181.5 L423.8 1184.5" stroke="#333" stroke-width="1.1"/>
<!-- icon 2: clear -->
<g fill="none" stroke="#333" stroke-width="1.3">
<path d="M418 1222.6 H410.6 V1202.8 H433.3 V1208"/>
<path d="M410.6 1209 H418 M410.6 1216.7 H418 M418 1202.8 V1209 M426 1202.8 V1209"/>
</g>
<path d="M418 1209 H427.5 L418.5 1218 Z" fill="#8cc0ec"/>
<path d="M418.6 1218 V1209.7 H427 " fill="none" stroke="#0062b8" stroke-width="1.4"/>
<path d="M430.5 1208.5 L433.6 1208.5 L433.6 1212 Z" fill="#0062b8"/>
<path d="M417.5 1222.6 H420.5 L418 1220.5 Z" fill="#0062b8"/>
<path d="M419.8 1219.6 L428.6 1210.8 L433.3 1215.5 L424.5 1224.3 Z" fill="#fff" stroke="#9b2fae" stroke-width="1.4" stroke-linejoin="miter"/>
<path d="M421.5 1218 L424 1215.6 L426.6 1218.2 L424.1 1220.7 Z" fill="#d98fe0"/>
<path d="M423.6 1215.6 L428.3 1220.3" stroke="#9b2fae" stroke-width="1.3"/>
<!-- icon 3: new -->
<g fill="none" stroke="#333" stroke-width="1.3">
<path d="M420.4 1241.2 H433.6 V1247 M426 1241.2 V1247"/>
<path d="M410.6 1246.5 V1261 H418 M410.6 1254.6 H418"/>
</g>
<rect x="417.8" y="1247" width="15.2" height="13.8" fill="#8cc0ec" stroke="#0062b8" stroke-width="1.5"/>
<path d="M425.6 1247 V1261 M417.8 1254.2 H433" stroke="#0062b8" stroke-width="1.5"/>
<path d="M415.2 1239 V1249.6 M410 1244.2 H420.6" stroke="#2ea043" stroke-width="1.5"/>
</svg>
</body></html>
